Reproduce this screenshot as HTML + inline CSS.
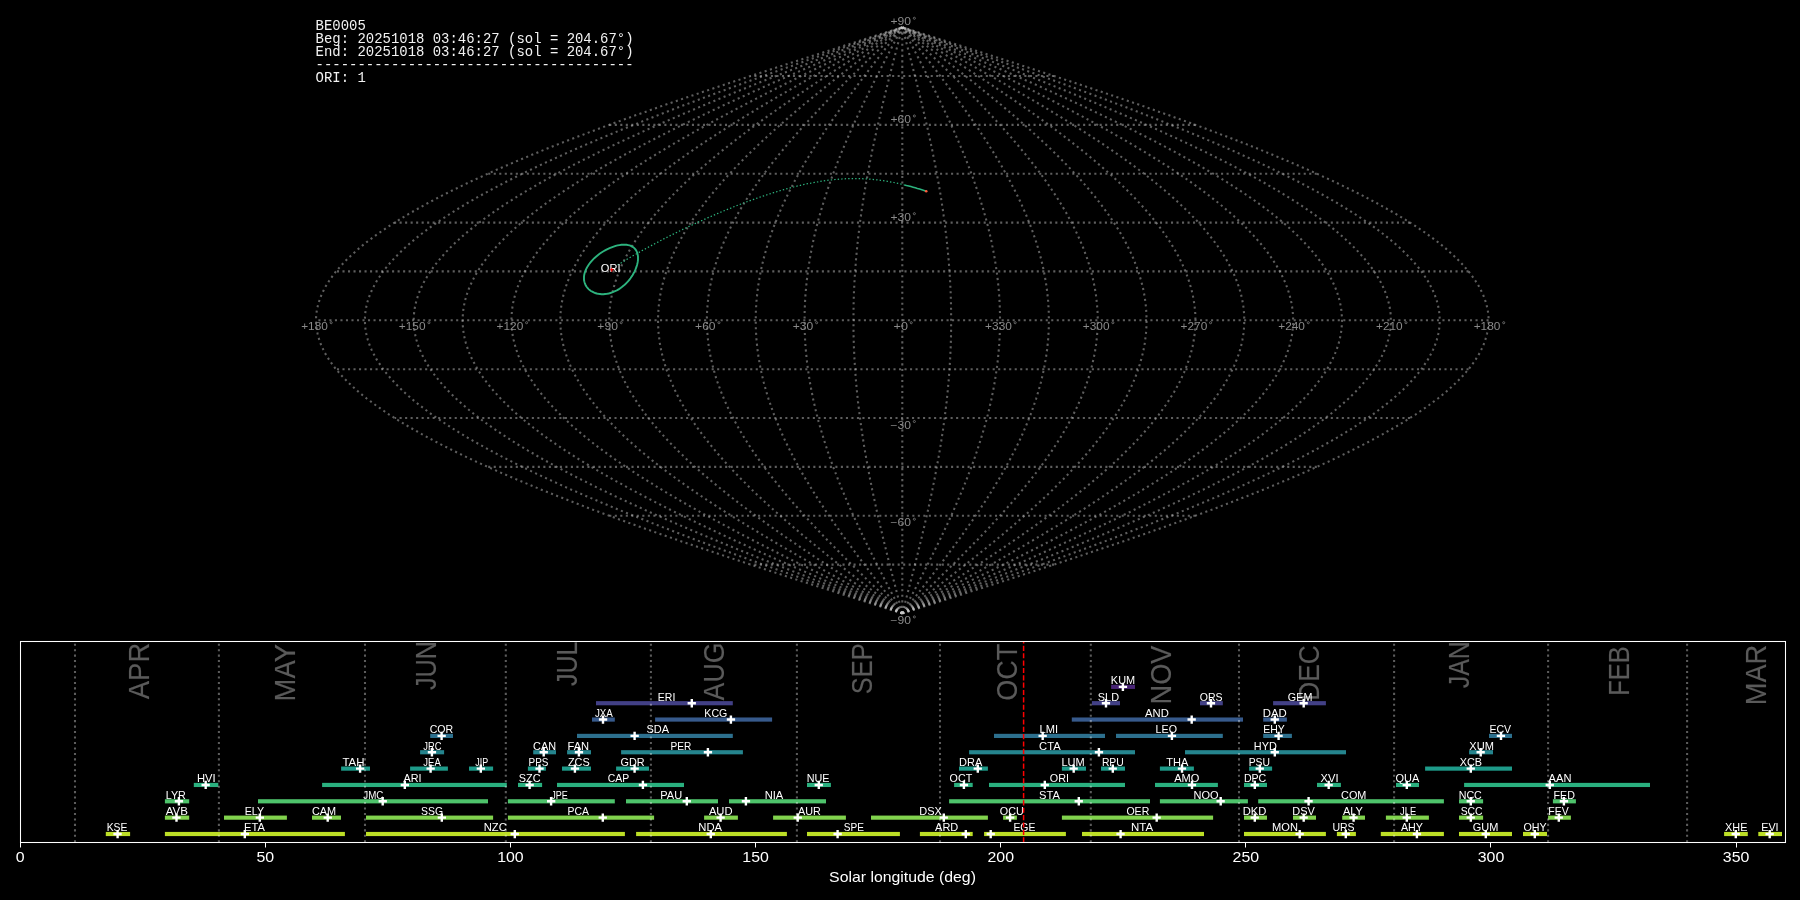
<!DOCTYPE html><html><head><meta charset="utf-8"><style>html,body{margin:0;padding:0;background:#000;width:1800px;height:900px;overflow:hidden}svg{display:block;will-change:transform}text{font-family:"Liberation Sans",sans-serif}.m{font-family:"Liberation Mono",monospace}</style></head><body>
<svg width="1800" height="900" viewBox="0 0 1800 900">
<rect width="1800" height="900" fill="#000"/>
<g fill="none" stroke="#c8c8c8" stroke-opacity="0.47" stroke-width="2.08" stroke-dasharray="2.08 3.43"><path d="M902.3 613.4 902.3 610.2 902.3 606.9 902.3 603.7 902.3 600.4 902.3 597.1 902.3 593.9 902.3 590.6 902.3 587.4 902.3 584.1 902.3 580.9 902.3 577.6 902.3 574.3 902.3 571.1 902.3 567.8 902.3 564.6 902.3 561.3 902.3 558.1 902.3 554.8 902.3 551.5 902.3 548.3 902.3 545.0 902.3 541.8 902.3 538.5 902.3 535.3 902.3 532.0 902.3 528.7 902.3 525.5 902.3 522.2 902.3 519.0 902.3 515.7 902.3 512.5 902.3 509.2 902.3 505.9 902.3 502.7 902.3 499.4 902.3 496.2 902.3 492.9 902.3 489.7 902.3 486.4 902.3 483.1 902.3 479.9 902.3 476.6 902.3 473.4 902.3 470.1 902.3 466.9 902.3 463.6 902.3 460.4 902.3 457.1 902.3 453.8 902.3 450.6 902.3 447.3 902.3 444.1 902.3 440.8 902.3 437.6 902.3 434.3 902.3 431.0 902.3 427.8 902.3 424.5 902.3 421.3 902.3 418.0 902.3 414.8 902.3 411.5 902.3 408.2 902.3 405.0 902.3 401.7 902.3 398.5 902.3 395.2 902.3 392.0 902.3 388.7 902.3 385.4 902.3 382.2 902.3 378.9 902.3 375.7 902.3 372.4 902.3 369.2 902.3 365.9 902.3 362.6 902.3 359.4 902.3 356.1 902.3 352.9 902.3 349.6 902.3 346.4 902.3 343.1 902.3 339.8 902.3 336.6 902.3 333.3 902.3 330.1 902.3 326.8 902.3 323.6 902.3 320.3 902.3 317.0 902.3 313.8 902.3 310.5 902.3 307.3 902.3 304.0 902.3 300.8 902.3 297.5 902.3 294.2 902.3 291.0 902.3 287.7 902.3 284.5 902.3 281.2 902.3 278.0 902.3 274.7 902.3 271.4 902.3 268.2 902.3 264.9 902.3 261.7 902.3 258.4 902.3 255.2 902.3 251.9 902.3 248.6 902.3 245.4 902.3 242.1 902.3 238.9 902.3 235.6 902.3 232.4 902.3 229.1 902.3 225.8 902.3 222.6 902.3 219.3 902.3 216.1 902.3 212.8 902.3 209.6 902.3 206.3 902.3 203.0 902.3 199.8 902.3 196.5 902.3 193.3 902.3 190.0 902.3 186.8 902.3 183.5 902.3 180.2 902.3 177.0 902.3 173.7 902.3 170.5 902.3 167.2 902.3 164.0 902.3 160.7 902.3 157.5 902.3 154.2 902.3 150.9 902.3 147.7 902.3 144.4 902.3 141.2 902.3 137.9 902.3 134.7 902.3 131.4 902.3 128.1 902.3 124.9 902.3 121.6 902.3 118.4 902.3 115.1 902.3 111.9 902.3 108.6 902.3 105.3 902.3 102.1 902.3 98.8 902.3 95.6 902.3 92.3 902.3 89.1 902.3 85.8 902.3 82.5 902.3 79.3 902.3 76.0 902.3 72.8 902.3 69.5 902.3 66.3 902.3 63.0 902.3 59.7 902.3 56.5 902.3 53.2 902.3 50.0 902.3 46.7 902.3 43.5 902.3 40.2 902.3 36.9 902.3 33.7 902.3 30.4 902.3 27.2"/><path d="M902.3 613.4 901.4 610.2 900.6 606.9 899.7 603.7 898.9 600.4 898.0 597.1 897.2 593.9 896.3 590.6 895.5 587.4 894.7 584.1 893.8 580.9 893.0 577.6 892.1 574.3 891.3 571.1 890.5 567.8 889.7 564.6 888.8 561.3 888.0 558.1 887.2 554.8 886.4 551.5 885.6 548.3 884.8 545.0 884.0 541.8 883.2 538.5 882.4 535.3 881.7 532.0 880.9 528.7 880.1 525.5 879.4 522.2 878.6 519.0 877.9 515.7 877.1 512.5 876.4 509.2 875.7 505.9 875.0 502.7 874.3 499.4 873.6 496.2 872.9 492.9 872.2 489.7 871.6 486.4 870.9 483.1 870.2 479.9 869.6 476.6 869.0 473.4 868.4 470.1 867.8 466.9 867.2 463.6 866.6 460.4 866.0 457.1 865.4 453.8 864.9 450.6 864.3 447.3 863.8 444.1 863.3 440.8 862.8 437.6 862.3 434.3 861.8 431.0 861.3 427.8 860.9 424.5 860.4 421.3 860.0 418.0 859.6 414.8 859.2 411.5 858.8 408.2 858.4 405.0 858.0 401.7 857.7 398.5 857.3 395.2 857.0 392.0 856.7 388.7 856.4 385.4 856.1 382.2 855.8 378.9 855.6 375.7 855.3 372.4 855.1 369.2 854.9 365.9 854.7 362.6 854.5 359.4 854.3 356.1 854.2 352.9 854.0 349.6 853.9 346.4 853.8 343.1 853.7 339.8 853.6 336.6 853.6 333.3 853.5 330.1 853.5 326.8 853.5 323.6 853.4 320.3 853.5 317.0 853.5 313.8 853.5 310.5 853.6 307.3 853.6 304.0 853.7 300.8 853.8 297.5 853.9 294.2 854.0 291.0 854.2 287.7 854.3 284.5 854.5 281.2 854.7 278.0 854.9 274.7 855.1 271.4 855.3 268.2 855.6 264.9 855.8 261.7 856.1 258.4 856.4 255.2 856.7 251.9 857.0 248.6 857.3 245.4 857.7 242.1 858.0 238.9 858.4 235.6 858.8 232.4 859.2 229.1 859.6 225.8 860.0 222.6 860.4 219.3 860.9 216.1 861.3 212.8 861.8 209.6 862.3 206.3 862.8 203.0 863.3 199.8 863.8 196.5 864.3 193.3 864.9 190.0 865.4 186.8 866.0 183.5 866.6 180.2 867.2 177.0 867.8 173.7 868.4 170.5 869.0 167.2 869.6 164.0 870.2 160.7 870.9 157.5 871.6 154.2 872.2 150.9 872.9 147.7 873.6 144.4 874.3 141.2 875.0 137.9 875.7 134.7 876.4 131.4 877.1 128.1 877.9 124.9 878.6 121.6 879.4 118.4 880.1 115.1 880.9 111.9 881.7 108.6 882.4 105.3 883.2 102.1 884.0 98.8 884.8 95.6 885.6 92.3 886.4 89.1 887.2 85.8 888.0 82.5 888.8 79.3 889.7 76.0 890.5 72.8 891.3 69.5 892.1 66.3 893.0 63.0 893.8 59.7 894.7 56.5 895.5 53.2 896.3 50.0 897.2 46.7 898.0 43.5 898.9 40.2 899.7 36.9 900.6 33.7 901.4 30.4 902.3 27.2"/><path d="M902.3 613.4 900.6 610.2 898.9 606.9 897.2 603.7 895.5 600.4 893.8 597.1 892.1 593.9 890.4 590.6 888.7 587.4 887.0 584.1 885.3 580.9 883.7 577.6 882.0 574.3 880.3 571.1 878.7 567.8 877.0 564.6 875.4 561.3 873.7 558.1 872.1 554.8 870.5 551.5 868.9 548.3 867.3 545.0 865.7 541.8 864.1 538.5 862.6 535.3 861.0 532.0 859.5 528.7 857.9 525.5 856.4 522.2 854.9 519.0 853.4 515.7 852.0 512.5 850.5 509.2 849.1 505.9 847.7 502.7 846.3 499.4 844.9 496.2 843.5 492.9 842.1 489.7 840.8 486.4 839.5 483.1 838.2 479.9 836.9 476.6 835.7 473.4 834.4 470.1 833.2 466.9 832.0 463.6 830.8 460.4 829.7 457.1 828.6 453.8 827.4 450.6 826.4 447.3 825.3 444.1 824.3 440.8 823.3 437.6 822.3 434.3 821.3 431.0 820.4 427.8 819.4 424.5 818.5 421.3 817.7 418.0 816.8 414.8 816.0 411.5 815.2 408.2 814.5 405.0 813.7 401.7 813.0 398.5 812.4 395.2 811.7 392.0 811.1 388.7 810.5 385.4 809.9 382.2 809.4 378.9 808.9 375.7 808.4 372.4 807.9 369.2 807.5 365.9 807.1 362.6 806.7 359.4 806.4 356.1 806.1 352.9 805.8 349.6 805.5 346.4 805.3 343.1 805.1 339.8 805.0 336.6 804.8 333.3 804.7 330.1 804.6 326.8 804.6 323.6 804.6 320.3 804.6 317.0 804.6 313.8 804.7 310.5 804.8 307.3 805.0 304.0 805.1 300.8 805.3 297.5 805.5 294.2 805.8 291.0 806.1 287.7 806.4 284.5 806.7 281.2 807.1 278.0 807.5 274.7 807.9 271.4 808.4 268.2 808.9 264.9 809.4 261.7 809.9 258.4 810.5 255.2 811.1 251.9 811.7 248.6 812.4 245.4 813.0 242.1 813.7 238.9 814.5 235.6 815.2 232.4 816.0 229.1 816.8 225.8 817.7 222.6 818.5 219.3 819.4 216.1 820.4 212.8 821.3 209.6 822.3 206.3 823.3 203.0 824.3 199.8 825.3 196.5 826.4 193.3 827.4 190.0 828.6 186.8 829.7 183.5 830.8 180.2 832.0 177.0 833.2 173.7 834.4 170.5 835.7 167.2 836.9 164.0 838.2 160.7 839.5 157.5 840.8 154.2 842.1 150.9 843.5 147.7 844.9 144.4 846.3 141.2 847.7 137.9 849.1 134.7 850.5 131.4 852.0 128.1 853.4 124.9 854.9 121.6 856.4 118.4 857.9 115.1 859.5 111.9 861.0 108.6 862.6 105.3 864.1 102.1 865.7 98.8 867.3 95.6 868.9 92.3 870.5 89.1 872.1 85.8 873.7 82.5 875.4 79.3 877.0 76.0 878.7 72.8 880.3 69.5 882.0 66.3 883.7 63.0 885.3 59.7 887.0 56.5 888.7 53.2 890.4 50.0 892.1 46.7 893.8 43.5 895.5 40.2 897.2 36.9 898.9 33.7 900.6 30.4 902.3 27.2"/><path d="M902.3 613.4 899.7 610.2 897.2 606.9 894.6 603.7 892.1 600.4 889.5 597.1 887.0 593.9 884.4 590.6 881.9 587.4 879.4 584.1 876.8 580.9 874.3 577.6 871.8 574.3 869.3 571.1 866.8 567.8 864.4 564.6 861.9 561.3 859.4 558.1 857.0 554.8 854.6 551.5 852.2 548.3 849.8 545.0 847.4 541.8 845.0 538.5 842.7 535.3 840.4 532.0 838.1 528.7 835.8 525.5 833.5 522.2 831.2 519.0 829.0 515.7 826.8 512.5 824.6 509.2 822.5 505.9 820.3 502.7 818.2 499.4 816.2 496.2 814.1 492.9 812.1 489.7 810.1 486.4 808.1 483.1 806.1 479.9 804.2 476.6 802.3 473.4 800.5 470.1 798.7 466.9 796.9 463.6 795.1 460.4 793.4 457.1 791.7 453.8 790.0 450.6 788.4 447.3 786.8 444.1 785.2 440.8 783.7 437.6 782.2 434.3 780.8 431.0 779.4 427.8 778.0 424.5 776.7 421.3 775.4 418.0 774.1 414.8 772.9 411.5 771.7 408.2 770.6 405.0 769.5 401.7 768.4 398.5 767.4 395.2 766.4 392.0 765.5 388.7 764.6 385.4 763.7 382.2 762.9 378.9 762.1 375.7 761.4 372.4 760.7 369.2 760.1 365.9 759.5 362.6 758.9 359.4 758.4 356.1 758.0 352.9 757.5 349.6 757.2 346.4 756.8 343.1 756.5 339.8 756.3 336.6 756.1 333.3 755.9 330.1 755.8 326.8 755.8 323.6 755.7 320.3 755.8 317.0 755.8 313.8 755.9 310.5 756.1 307.3 756.3 304.0 756.5 300.8 756.8 297.5 757.2 294.2 757.5 291.0 758.0 287.7 758.4 284.5 758.9 281.2 759.5 278.0 760.1 274.7 760.7 271.4 761.4 268.2 762.1 264.9 762.9 261.7 763.7 258.4 764.6 255.2 765.5 251.9 766.4 248.6 767.4 245.4 768.4 242.1 769.5 238.9 770.6 235.6 771.7 232.4 772.9 229.1 774.1 225.8 775.4 222.6 776.7 219.3 778.0 216.1 779.4 212.8 780.8 209.6 782.2 206.3 783.7 203.0 785.2 199.8 786.8 196.5 788.4 193.3 790.0 190.0 791.7 186.8 793.4 183.5 795.1 180.2 796.9 177.0 798.7 173.7 800.5 170.5 802.3 167.2 804.2 164.0 806.1 160.7 808.1 157.5 810.1 154.2 812.1 150.9 814.1 147.7 816.2 144.4 818.2 141.2 820.3 137.9 822.5 134.7 824.6 131.4 826.8 128.1 829.0 124.9 831.2 121.6 833.5 118.4 835.8 115.1 838.1 111.9 840.4 108.6 842.7 105.3 845.0 102.1 847.4 98.8 849.8 95.6 852.2 92.3 854.6 89.1 857.0 85.8 859.4 82.5 861.9 79.3 864.4 76.0 866.8 72.8 869.3 69.5 871.8 66.3 874.3 63.0 876.8 59.7 879.4 56.5 881.9 53.2 884.4 50.0 887.0 46.7 889.5 43.5 892.1 40.2 894.6 36.9 897.2 33.7 899.7 30.4 902.3 27.2"/><path d="M902.3 613.4 898.9 610.2 895.5 606.9 892.1 603.7 888.7 600.4 885.3 597.1 881.9 593.9 878.5 590.6 875.1 587.4 871.7 584.1 868.4 580.9 865.0 577.6 861.7 574.3 858.3 571.1 855.0 567.8 851.7 564.6 848.4 561.3 845.2 558.1 841.9 554.8 838.7 551.5 835.5 548.3 832.3 545.0 829.1 541.8 825.9 538.5 822.8 535.3 819.7 532.0 816.6 528.7 813.6 525.5 810.6 522.2 807.6 519.0 804.6 515.7 801.7 512.5 798.7 509.2 795.9 505.9 793.0 502.7 790.2 499.4 787.4 496.2 784.7 492.9 782.0 489.7 779.3 486.4 776.7 483.1 774.1 479.9 771.5 476.6 769.0 473.4 766.5 470.1 764.1 466.9 761.7 463.6 759.4 460.4 757.1 457.1 754.8 453.8 752.6 450.6 750.4 447.3 748.3 444.1 746.2 440.8 744.2 437.6 742.2 434.3 740.3 431.0 738.4 427.8 736.6 424.5 734.8 421.3 733.1 418.0 731.4 414.8 729.8 411.5 728.2 408.2 726.7 405.0 725.2 401.7 723.8 398.5 722.4 395.2 721.1 392.0 719.9 388.7 718.7 385.4 717.5 382.2 716.4 378.9 715.4 375.7 714.5 372.4 713.5 369.2 712.7 365.9 711.9 362.6 711.2 359.4 710.5 356.1 709.8 352.9 709.3 349.6 708.8 346.4 708.3 343.1 708.0 339.8 707.6 336.6 707.4 333.3 707.1 330.1 707.0 326.8 706.9 323.6 706.9 320.3 706.9 317.0 707.0 313.8 707.1 310.5 707.4 307.3 707.6 304.0 708.0 300.8 708.3 297.5 708.8 294.2 709.3 291.0 709.8 287.7 710.5 284.5 711.2 281.2 711.9 278.0 712.7 274.7 713.5 271.4 714.5 268.2 715.4 264.9 716.4 261.7 717.5 258.4 718.7 255.2 719.9 251.9 721.1 248.6 722.4 245.4 723.8 242.1 725.2 238.9 726.7 235.6 728.2 232.4 729.8 229.1 731.4 225.8 733.1 222.6 734.8 219.3 736.6 216.1 738.4 212.8 740.3 209.6 742.2 206.3 744.2 203.0 746.2 199.8 748.3 196.5 750.4 193.3 752.6 190.0 754.8 186.8 757.1 183.5 759.4 180.2 761.7 177.0 764.1 173.7 766.5 170.5 769.0 167.2 771.5 164.0 774.1 160.7 776.7 157.5 779.3 154.2 782.0 150.9 784.7 147.7 787.4 144.4 790.2 141.2 793.0 137.9 795.9 134.7 798.7 131.4 801.7 128.1 804.6 124.9 807.6 121.6 810.6 118.4 813.6 115.1 816.6 111.9 819.7 108.6 822.8 105.3 825.9 102.1 829.1 98.8 832.3 95.6 835.5 92.3 838.7 89.1 841.9 85.8 845.2 82.5 848.4 79.3 851.7 76.0 855.0 72.8 858.3 69.5 861.7 66.3 865.0 63.0 868.4 59.7 871.7 56.5 875.1 53.2 878.5 50.0 881.9 46.7 885.3 43.5 888.7 40.2 892.1 36.9 895.5 33.7 898.9 30.4 902.3 27.2"/><path d="M902.3 613.4 898.0 610.2 893.8 606.9 889.5 603.7 885.3 600.4 881.0 597.1 876.8 593.9 872.5 590.6 868.3 587.4 864.1 584.1 859.9 580.9 855.7 577.6 851.5 574.3 847.4 571.1 843.2 567.8 839.1 564.6 835.0 561.3 830.9 558.1 826.8 554.8 822.8 551.5 818.8 548.3 814.8 545.0 810.8 541.8 806.9 538.5 802.9 535.3 799.1 532.0 795.2 528.7 791.4 525.5 787.6 522.2 783.9 519.0 780.2 515.7 776.5 512.5 772.9 509.2 769.3 505.9 765.7 502.7 762.2 499.4 758.7 496.2 755.3 492.9 751.9 489.7 748.6 486.4 745.3 483.1 742.0 479.9 738.8 476.6 735.7 473.4 732.6 470.1 729.6 466.9 726.6 463.6 723.6 460.4 720.8 457.1 717.9 453.8 715.2 450.6 712.5 447.3 709.8 444.1 707.2 440.8 704.7 437.6 702.2 434.3 699.8 431.0 697.4 427.8 695.1 424.5 692.9 421.3 690.8 418.0 688.7 414.8 686.6 411.5 684.6 408.2 682.7 405.0 680.9 401.7 679.1 398.5 677.4 395.2 675.8 392.0 674.2 388.7 672.8 385.4 671.3 382.2 670.0 378.9 668.7 375.7 667.5 372.4 666.3 369.2 665.3 365.9 664.3 362.6 663.4 359.4 662.5 356.1 661.7 352.9 661.0 349.6 660.4 346.4 659.8 343.1 659.4 339.8 659.0 336.6 658.6 333.3 658.4 330.1 658.2 326.8 658.1 323.6 658.0 320.3 658.1 317.0 658.2 313.8 658.4 310.5 658.6 307.3 659.0 304.0 659.4 300.8 659.8 297.5 660.4 294.2 661.0 291.0 661.7 287.7 662.5 284.5 663.4 281.2 664.3 278.0 665.3 274.7 666.3 271.4 667.5 268.2 668.7 264.9 670.0 261.7 671.3 258.4 672.8 255.2 674.2 251.9 675.8 248.6 677.4 245.4 679.1 242.1 680.9 238.9 682.7 235.6 684.6 232.4 686.6 229.1 688.7 225.8 690.8 222.6 692.9 219.3 695.1 216.1 697.4 212.8 699.8 209.6 702.2 206.3 704.7 203.0 707.2 199.8 709.8 196.5 712.5 193.3 715.2 190.0 717.9 186.8 720.8 183.5 723.6 180.2 726.6 177.0 729.6 173.7 732.6 170.5 735.7 167.2 738.8 164.0 742.0 160.7 745.3 157.5 748.6 154.2 751.9 150.9 755.3 147.7 758.7 144.4 762.2 141.2 765.7 137.9 769.3 134.7 772.9 131.4 776.5 128.1 780.2 124.9 783.9 121.6 787.6 118.4 791.4 115.1 795.2 111.9 799.1 108.6 802.9 105.3 806.9 102.1 810.8 98.8 814.8 95.6 818.8 92.3 822.8 89.1 826.8 85.8 830.9 82.5 835.0 79.3 839.1 76.0 843.2 72.8 847.4 69.5 851.5 66.3 855.7 63.0 859.9 59.7 864.1 56.5 868.3 53.2 872.5 50.0 876.8 46.7 881.0 43.5 885.3 40.2 889.5 36.9 893.8 33.7 898.0 30.4 902.3 27.2"/><path d="M902.3 613.4 897.2 610.2 892.1 606.9 887.0 603.7 881.9 600.4 876.8 597.1 871.7 593.9 866.6 590.6 861.5 587.4 856.4 584.1 851.4 580.9 846.4 577.6 841.4 574.3 836.4 571.1 831.4 567.8 826.4 564.6 821.5 561.3 816.6 558.1 811.7 554.8 806.9 551.5 802.0 548.3 797.3 545.0 792.5 541.8 787.8 538.5 783.1 535.3 778.4 532.0 773.8 528.7 769.2 525.5 764.7 522.2 760.2 519.0 755.7 515.7 751.3 512.5 747.0 509.2 742.6 505.9 738.4 502.7 734.2 499.4 730.0 496.2 725.9 492.9 721.8 489.7 717.8 486.4 713.9 483.1 710.0 479.9 706.2 476.6 702.4 473.4 698.7 470.1 695.0 466.9 691.4 463.6 687.9 460.4 684.5 457.1 681.1 453.8 677.7 450.6 674.5 447.3 671.3 444.1 668.2 440.8 665.2 437.6 662.2 434.3 659.3 431.0 656.5 427.8 653.7 424.5 651.0 421.3 648.4 418.0 645.9 414.8 643.5 411.5 641.1 408.2 638.8 405.0 636.6 401.7 634.5 398.5 632.5 395.2 630.5 392.0 628.6 388.7 626.8 385.4 625.1 382.2 623.5 378.9 622.0 375.7 620.5 372.4 619.2 369.2 617.9 365.9 616.7 362.6 615.6 359.4 614.6 356.1 613.6 352.9 612.8 349.6 612.0 346.4 611.4 343.1 610.8 339.8 610.3 336.6 609.9 333.3 609.6 330.1 609.3 326.8 609.2 323.6 609.2 320.3 609.2 317.0 609.3 313.8 609.6 310.5 609.9 307.3 610.3 304.0 610.8 300.8 611.4 297.5 612.0 294.2 612.8 291.0 613.6 287.7 614.6 284.5 615.6 281.2 616.7 278.0 617.9 274.7 619.2 271.4 620.5 268.2 622.0 264.9 623.5 261.7 625.1 258.4 626.8 255.2 628.6 251.9 630.5 248.6 632.5 245.4 634.5 242.1 636.6 238.9 638.8 235.6 641.1 232.4 643.5 229.1 645.9 225.8 648.4 222.6 651.0 219.3 653.7 216.1 656.5 212.8 659.3 209.6 662.2 206.3 665.2 203.0 668.2 199.8 671.3 196.5 674.5 193.3 677.7 190.0 681.1 186.8 684.5 183.5 687.9 180.2 691.4 177.0 695.0 173.7 698.7 170.5 702.4 167.2 706.2 164.0 710.0 160.7 713.9 157.5 717.8 154.2 721.8 150.9 725.9 147.7 730.0 144.4 734.2 141.2 738.4 137.9 742.6 134.7 747.0 131.4 751.3 128.1 755.7 124.9 760.2 121.6 764.7 118.4 769.2 115.1 773.8 111.9 778.4 108.6 783.1 105.3 787.8 102.1 792.5 98.8 797.3 95.6 802.0 92.3 806.9 89.1 811.7 85.8 816.6 82.5 821.5 79.3 826.4 76.0 831.4 72.8 836.4 69.5 841.4 66.3 846.4 63.0 851.4 59.7 856.4 56.5 861.5 53.2 866.6 50.0 871.7 46.7 876.8 43.5 881.9 40.2 887.0 36.9 892.1 33.7 897.2 30.4 902.3 27.2"/><path d="M902.3 613.4 896.3 610.2 890.4 606.9 884.4 603.7 878.4 600.4 872.5 597.1 866.6 593.9 860.6 590.6 854.7 587.4 848.8 584.1 842.9 580.9 837.0 577.6 831.2 574.3 825.4 571.1 819.6 567.8 813.8 564.6 808.0 561.3 802.3 558.1 796.6 554.8 791.0 551.5 785.3 548.3 779.7 545.0 774.2 541.8 768.7 538.5 763.2 535.3 757.8 532.0 752.4 528.7 747.0 525.5 741.7 522.2 736.5 519.0 731.3 515.7 726.2 512.5 721.1 509.2 716.0 505.9 711.1 502.7 706.1 499.4 701.3 496.2 696.5 492.9 691.8 489.7 687.1 486.4 682.5 483.1 677.9 479.9 673.5 476.6 669.1 473.4 664.7 470.1 660.5 466.9 656.3 463.6 652.2 460.4 648.2 457.1 644.2 453.8 640.3 450.6 636.5 447.3 632.8 444.1 629.2 440.8 625.6 437.6 622.2 434.3 618.8 431.0 615.5 427.8 612.3 424.5 609.2 421.3 606.1 418.0 603.2 414.8 600.3 411.5 597.6 408.2 594.9 405.0 592.4 401.7 589.9 398.5 587.5 395.2 585.2 392.0 583.0 388.7 580.9 385.4 578.9 382.2 577.1 378.9 575.3 375.7 573.6 372.4 572.0 369.2 570.5 365.9 569.1 362.6 567.8 359.4 566.6 356.1 565.5 352.9 564.5 349.6 563.6 346.4 562.9 343.1 562.2 339.8 561.6 336.6 561.1 333.3 560.8 330.1 560.5 326.8 560.4 323.6 560.3 320.3 560.4 317.0 560.5 313.8 560.8 310.5 561.1 307.3 561.6 304.0 562.2 300.8 562.9 297.5 563.6 294.2 564.5 291.0 565.5 287.7 566.6 284.5 567.8 281.2 569.1 278.0 570.5 274.7 572.0 271.4 573.6 268.2 575.3 264.9 577.1 261.7 578.9 258.4 580.9 255.2 583.0 251.9 585.2 248.6 587.5 245.4 589.9 242.1 592.4 238.9 594.9 235.6 597.6 232.4 600.3 229.1 603.2 225.8 606.1 222.6 609.2 219.3 612.3 216.1 615.5 212.8 618.8 209.6 622.2 206.3 625.6 203.0 629.2 199.8 632.8 196.5 636.5 193.3 640.3 190.0 644.2 186.8 648.2 183.5 652.2 180.2 656.3 177.0 660.5 173.7 664.7 170.5 669.1 167.2 673.5 164.0 677.9 160.7 682.5 157.5 687.1 154.2 691.8 150.9 696.5 147.7 701.3 144.4 706.1 141.2 711.1 137.9 716.0 134.7 721.1 131.4 726.2 128.1 731.3 124.9 736.5 121.6 741.7 118.4 747.0 115.1 752.4 111.9 757.8 108.6 763.2 105.3 768.7 102.1 774.2 98.8 779.7 95.6 785.3 92.3 791.0 89.1 796.6 85.8 802.3 82.5 808.0 79.3 813.8 76.0 819.6 72.8 825.4 69.5 831.2 66.3 837.0 63.0 842.9 59.7 848.8 56.5 854.7 53.2 860.6 50.0 866.6 46.7 872.5 43.5 878.4 40.2 884.4 36.9 890.4 33.7 896.3 30.4 902.3 27.2"/><path d="M902.3 613.4 895.5 610.2 888.7 606.9 881.8 603.7 875.0 600.4 868.2 597.1 861.4 593.9 854.7 590.6 847.9 587.4 841.2 584.1 834.4 580.9 827.7 577.6 821.0 574.3 814.4 571.1 807.7 567.8 801.1 564.6 794.6 561.3 788.0 558.1 781.5 554.8 775.1 551.5 768.6 548.3 762.2 545.0 755.9 541.8 749.6 538.5 743.3 535.3 737.1 532.0 731.0 528.7 724.9 525.5 718.8 522.2 712.8 519.0 706.9 515.7 701.0 512.5 695.2 509.2 689.4 505.9 683.7 502.7 678.1 499.4 672.6 496.2 667.1 492.9 661.7 489.7 656.3 486.4 651.1 483.1 645.9 479.9 640.8 476.6 635.7 473.4 630.8 470.1 625.9 466.9 621.2 463.6 616.5 460.4 611.8 457.1 607.3 453.8 602.9 450.6 598.6 447.3 594.3 444.1 590.2 440.8 586.1 437.6 582.1 434.3 578.3 431.0 574.5 427.8 570.8 424.5 567.3 421.3 563.8 418.0 560.5 414.8 557.2 411.5 554.1 408.2 551.0 405.0 548.1 401.7 545.2 398.5 542.5 395.2 539.9 392.0 537.4 388.7 535.0 385.4 532.8 382.2 530.6 378.9 528.5 375.7 526.6 372.4 524.8 369.2 523.1 365.9 521.5 362.6 520.0 359.4 518.6 356.1 517.4 352.9 516.3 349.6 515.3 346.4 514.4 343.1 513.6 339.8 512.9 336.6 512.4 333.3 512.0 330.1 511.7 326.8 511.5 323.6 511.5 320.3 511.5 317.0 511.7 313.8 512.0 310.5 512.4 307.3 512.9 304.0 513.6 300.8 514.4 297.5 515.3 294.2 516.3 291.0 517.4 287.7 518.6 284.5 520.0 281.2 521.5 278.0 523.1 274.7 524.8 271.4 526.6 268.2 528.5 264.9 530.6 261.7 532.8 258.4 535.0 255.2 537.4 251.9 539.9 248.6 542.5 245.4 545.2 242.1 548.1 238.9 551.0 235.6 554.1 232.4 557.2 229.1 560.5 225.8 563.8 222.6 567.3 219.3 570.8 216.1 574.5 212.8 578.3 209.6 582.1 206.3 586.1 203.0 590.2 199.8 594.3 196.5 598.6 193.3 602.9 190.0 607.3 186.8 611.8 183.5 616.5 180.2 621.2 177.0 625.9 173.7 630.8 170.5 635.7 167.2 640.8 164.0 645.9 160.7 651.1 157.5 656.3 154.2 661.7 150.9 667.1 147.7 672.6 144.4 678.1 141.2 683.7 137.9 689.4 134.7 695.2 131.4 701.0 128.1 706.9 124.9 712.8 121.6 718.8 118.4 724.9 115.1 731.0 111.9 737.1 108.6 743.3 105.3 749.6 102.1 755.9 98.8 762.2 95.6 768.6 92.3 775.1 89.1 781.5 85.8 788.0 82.5 794.6 79.3 801.1 76.0 807.7 72.8 814.4 69.5 821.0 66.3 827.7 63.0 834.4 59.7 841.2 56.5 847.9 53.2 854.7 50.0 861.4 46.7 868.2 43.5 875.0 40.2 881.8 36.9 888.7 33.7 895.5 30.4 902.3 27.2"/><path d="M902.3 613.4 894.6 610.2 887.0 606.9 879.3 603.7 871.6 600.4 864.0 597.1 856.3 593.9 848.7 590.6 841.1 587.4 833.5 584.1 825.9 580.9 818.4 577.6 810.9 574.3 803.4 571.1 795.9 567.8 788.5 564.6 781.1 561.3 773.7 558.1 766.4 554.8 759.1 551.5 751.9 548.3 744.7 545.0 737.6 541.8 730.5 538.5 723.5 535.3 716.5 532.0 709.6 528.7 702.7 525.5 695.9 522.2 689.1 519.0 682.5 515.7 675.8 512.5 669.3 509.2 662.8 505.9 656.4 502.7 650.1 499.4 643.9 496.2 637.7 492.9 631.6 489.7 625.6 486.4 619.7 483.1 613.8 479.9 608.1 476.6 602.4 473.4 596.9 470.1 591.4 466.9 586.0 463.6 580.7 460.4 575.5 457.1 570.5 453.8 565.5 450.6 560.6 447.3 555.8 444.1 551.1 440.8 546.6 437.6 542.1 434.3 537.8 431.0 533.5 427.8 529.4 424.5 525.4 421.3 521.5 418.0 517.7 414.8 514.1 411.5 510.5 408.2 507.1 405.0 503.8 401.7 500.6 398.5 497.6 395.2 494.6 392.0 491.8 388.7 489.1 385.4 486.6 382.2 484.1 378.9 481.8 375.7 479.6 372.4 477.6 369.2 475.7 365.9 473.9 362.6 472.2 359.4 470.7 356.1 469.3 352.9 468.0 349.6 466.9 346.4 465.9 343.1 465.0 339.8 464.3 336.6 463.7 333.3 463.2 330.1 462.9 326.8 462.7 323.6 462.6 320.3 462.7 317.0 462.9 313.8 463.2 310.5 463.7 307.3 464.3 304.0 465.0 300.8 465.9 297.5 466.9 294.2 468.0 291.0 469.3 287.7 470.7 284.5 472.2 281.2 473.9 278.0 475.7 274.7 477.6 271.4 479.6 268.2 481.8 264.9 484.1 261.7 486.6 258.4 489.1 255.2 491.8 251.9 494.6 248.6 497.6 245.4 500.6 242.1 503.8 238.9 507.1 235.6 510.5 232.4 514.1 229.1 517.7 225.8 521.5 222.6 525.4 219.3 529.4 216.1 533.5 212.8 537.8 209.6 542.1 206.3 546.6 203.0 551.1 199.8 555.8 196.5 560.6 193.3 565.5 190.0 570.5 186.8 575.5 183.5 580.7 180.2 586.0 177.0 591.4 173.7 596.9 170.5 602.4 167.2 608.1 164.0 613.8 160.7 619.7 157.5 625.6 154.2 631.6 150.9 637.7 147.7 643.9 144.4 650.1 141.2 656.4 137.9 662.8 134.7 669.3 131.4 675.8 128.1 682.5 124.9 689.1 121.6 695.9 118.4 702.7 115.1 709.6 111.9 716.5 108.6 723.5 105.3 730.5 102.1 737.6 98.8 744.7 95.6 751.9 92.3 759.1 89.1 766.4 85.8 773.7 82.5 781.1 79.3 788.5 76.0 795.9 72.8 803.4 69.5 810.9 66.3 818.4 63.0 825.9 59.7 833.5 56.5 841.1 53.2 848.7 50.0 856.3 46.7 864.0 43.5 871.6 40.2 879.3 36.9 887.0 33.7 894.6 30.4 902.3 27.2"/><path d="M902.3 613.4 893.8 610.2 885.2 606.9 876.7 603.7 868.2 600.4 859.7 597.1 851.2 593.9 842.8 590.6 834.3 587.4 825.9 584.1 817.5 580.9 809.1 577.6 800.7 574.3 792.4 571.1 784.1 567.8 775.9 564.6 767.6 561.3 759.5 558.1 751.3 554.8 743.2 551.5 735.2 548.3 727.2 545.0 719.3 541.8 711.4 538.5 703.6 535.3 695.8 532.0 688.1 528.7 680.5 525.5 672.9 522.2 665.4 519.0 658.0 515.7 650.7 512.5 643.4 509.2 636.2 505.9 629.1 502.7 622.1 499.4 615.1 496.2 608.3 492.9 601.5 489.7 594.8 486.4 588.3 483.1 581.8 479.9 575.4 476.6 569.1 473.4 562.9 470.1 556.8 466.9 550.9 463.6 545.0 460.4 539.2 457.1 533.6 453.8 528.0 450.6 522.6 447.3 517.3 444.1 512.1 440.8 507.1 437.6 502.1 434.3 497.3 431.0 492.6 427.8 488.0 424.5 483.5 421.3 479.2 418.0 475.0 414.8 470.9 411.5 467.0 408.2 463.2 405.0 459.5 401.7 456.0 398.5 452.6 395.2 449.3 392.0 446.2 388.7 443.2 385.4 440.4 382.2 437.7 378.9 435.1 375.7 432.7 372.4 430.4 369.2 428.3 365.9 426.3 362.6 424.4 359.4 422.7 356.1 421.2 352.9 419.8 349.6 418.5 346.4 417.4 343.1 416.4 339.8 415.6 336.6 414.9 333.3 414.4 330.1 414.0 326.8 413.8 323.6 413.7 320.3 413.8 317.0 414.0 313.8 414.4 310.5 414.9 307.3 415.6 304.0 416.4 300.8 417.4 297.5 418.5 294.2 419.8 291.0 421.2 287.7 422.7 284.5 424.4 281.2 426.3 278.0 428.3 274.7 430.4 271.4 432.7 268.2 435.1 264.9 437.7 261.7 440.4 258.4 443.2 255.2 446.2 251.9 449.3 248.6 452.6 245.4 456.0 242.1 459.5 238.9 463.2 235.6 467.0 232.4 470.9 229.1 475.0 225.8 479.2 222.6 483.5 219.3 488.0 216.1 492.6 212.8 497.3 209.6 502.1 206.3 507.1 203.0 512.1 199.8 517.3 196.5 522.6 193.3 528.0 190.0 533.6 186.8 539.2 183.5 545.0 180.2 550.9 177.0 556.8 173.7 562.9 170.5 569.1 167.2 575.4 164.0 581.8 160.7 588.3 157.5 594.8 154.2 601.5 150.9 608.3 147.7 615.1 144.4 622.1 141.2 629.1 137.9 636.2 134.7 643.4 131.4 650.7 128.1 658.0 124.9 665.4 121.6 672.9 118.4 680.5 115.1 688.1 111.9 695.8 108.6 703.6 105.3 711.4 102.1 719.3 98.8 727.2 95.6 735.2 92.3 743.2 89.1 751.3 85.8 759.5 82.5 767.6 79.3 775.9 76.0 784.1 72.8 792.4 69.5 800.7 66.3 809.1 63.0 817.5 59.7 825.9 56.5 834.3 53.2 842.8 50.0 851.2 46.7 859.7 43.5 868.2 40.2 876.7 36.9 885.2 33.7 893.8 30.4 902.3 27.2"/><path d="M902.3 613.4 892.9 610.2 883.5 606.9 874.2 603.7 864.8 600.4 855.5 597.1 846.1 593.9 836.8 590.6 827.5 587.4 818.2 584.1 809.0 580.9 799.8 577.6 790.6 574.3 781.4 571.1 772.3 567.8 763.2 564.6 754.2 561.3 745.2 558.1 736.2 554.8 727.3 551.5 718.5 548.3 709.7 545.0 701.0 541.8 692.3 538.5 683.7 535.3 675.2 532.0 666.7 528.7 658.3 525.5 650.0 522.2 641.8 519.0 633.6 515.7 625.5 512.5 617.5 509.2 609.6 505.9 601.8 502.7 594.1 499.4 586.4 496.2 578.9 492.9 571.4 489.7 564.1 486.4 556.9 483.1 549.7 479.9 542.7 476.6 535.8 473.4 529.0 470.1 522.3 466.9 515.7 463.6 509.3 460.4 502.9 457.1 496.7 453.8 490.6 450.6 484.7 447.3 478.8 444.1 473.1 440.8 467.5 437.6 462.1 434.3 456.8 431.0 451.6 427.8 446.6 424.5 441.7 421.3 436.9 418.0 432.3 414.8 427.8 411.5 423.5 408.2 419.3 405.0 415.2 401.7 411.4 398.5 407.6 395.2 404.0 392.0 400.6 388.7 397.3 385.4 394.2 382.2 391.2 378.9 388.4 375.7 385.7 372.4 383.2 369.2 380.9 365.9 378.7 362.6 376.6 359.4 374.8 356.1 373.1 352.9 371.5 349.6 370.1 346.4 368.9 343.1 367.8 339.8 366.9 336.6 366.2 333.3 365.6 330.1 365.2 326.8 365.0 323.6 364.9 320.3 365.0 317.0 365.2 313.8 365.6 310.5 366.2 307.3 366.9 304.0 367.8 300.8 368.9 297.5 370.1 294.2 371.5 291.0 373.1 287.7 374.8 284.5 376.6 281.2 378.7 278.0 380.9 274.7 383.2 271.4 385.7 268.2 388.4 264.9 391.2 261.7 394.2 258.4 397.3 255.2 400.6 251.9 404.0 248.6 407.6 245.4 411.4 242.1 415.2 238.9 419.3 235.6 423.5 232.4 427.8 229.1 432.3 225.8 436.9 222.6 441.7 219.3 446.6 216.1 451.6 212.8 456.8 209.6 462.1 206.3 467.5 203.0 473.1 199.8 478.8 196.5 484.7 193.3 490.6 190.0 496.7 186.8 502.9 183.5 509.3 180.2 515.7 177.0 522.3 173.7 529.0 170.5 535.8 167.2 542.7 164.0 549.7 160.7 556.9 157.5 564.1 154.2 571.4 150.9 578.9 147.7 586.4 144.4 594.1 141.2 601.8 137.9 609.6 134.7 617.5 131.4 625.5 128.1 633.6 124.9 641.8 121.6 650.0 118.4 658.3 115.1 666.7 111.9 675.2 108.6 683.7 105.3 692.3 102.1 701.0 98.8 709.7 95.6 718.5 92.3 727.3 89.1 736.2 85.8 745.2 82.5 754.2 79.3 763.2 76.0 772.3 72.8 781.4 69.5 790.6 66.3 799.8 63.0 809.0 59.7 818.2 56.5 827.5 53.2 836.8 50.0 846.1 46.7 855.5 43.5 864.8 40.2 874.2 36.9 883.5 33.7 892.9 30.4 902.3 27.2"/><path d="M902.3 613.4 892.1 610.2 881.8 606.9 871.6 603.7 861.4 600.4 851.2 597.1 841.0 593.9 830.9 590.6 820.7 587.4 810.6 584.1 800.5 580.9 790.4 577.6 780.4 574.3 770.4 571.1 760.5 567.8 750.6 564.6 740.7 561.3 730.9 558.1 721.1 554.8 711.4 551.5 701.8 548.3 692.2 545.0 682.7 541.8 673.2 538.5 663.8 535.3 654.5 532.0 645.3 528.7 636.1 525.5 627.1 522.2 618.1 519.0 609.2 515.7 600.4 512.5 591.6 509.2 583.0 505.9 574.5 502.7 566.0 499.4 557.7 496.2 549.5 492.9 541.4 489.7 533.4 486.4 525.5 483.1 517.7 479.9 510.0 476.6 502.5 473.4 495.0 470.1 487.8 466.9 480.6 463.6 473.5 460.4 466.6 457.1 459.8 453.8 453.2 450.6 446.7 447.3 440.3 444.1 434.1 440.8 428.0 437.6 422.1 434.3 416.3 431.0 410.6 427.8 405.1 424.5 399.8 421.3 394.6 418.0 389.5 414.8 384.7 411.5 379.9 408.2 375.4 405.0 371.0 401.7 366.7 398.5 362.6 395.2 358.7 392.0 355.0 388.7 351.4 385.4 348.0 382.2 344.7 378.9 341.7 375.7 338.8 372.4 336.0 369.2 333.5 365.9 331.1 362.6 328.9 359.4 326.8 356.1 324.9 352.9 323.3 349.6 321.7 346.4 320.4 343.1 319.3 339.8 318.3 336.6 317.5 333.3 316.8 330.1 316.4 326.8 316.1 323.6 316.0 320.3 316.1 317.0 316.4 313.8 316.8 310.5 317.5 307.3 318.3 304.0 319.3 300.8 320.4 297.5 321.7 294.2 323.3 291.0 324.9 287.7 326.8 284.5 328.9 281.2 331.1 278.0 333.5 274.7 336.0 271.4 338.8 268.2 341.7 264.9 344.7 261.7 348.0 258.4 351.4 255.2 355.0 251.9 358.7 248.6 362.6 245.4 366.7 242.1 371.0 238.9 375.4 235.6 379.9 232.4 384.7 229.1 389.5 225.8 394.6 222.6 399.8 219.3 405.1 216.1 410.6 212.8 416.3 209.6 422.1 206.3 428.0 203.0 434.1 199.8 440.3 196.5 446.7 193.3 453.2 190.0 459.8 186.8 466.6 183.5 473.5 180.2 480.6 177.0 487.8 173.7 495.0 170.5 502.5 167.2 510.0 164.0 517.7 160.7 525.5 157.5 533.4 154.2 541.4 150.9 549.5 147.7 557.7 144.4 566.0 141.2 574.5 137.9 583.0 134.7 591.6 131.4 600.4 128.1 609.2 124.9 618.1 121.6 627.1 118.4 636.1 115.1 645.3 111.9 654.5 108.6 663.8 105.3 673.2 102.1 682.7 98.8 692.2 95.6 701.8 92.3 711.4 89.1 721.1 85.8 730.9 82.5 740.7 79.3 750.6 76.0 760.5 72.8 770.4 69.5 780.4 66.3 790.4 63.0 800.5 59.7 810.6 56.5 820.7 53.2 830.9 50.0 841.0 46.7 851.2 43.5 861.4 40.2 871.6 36.9 881.8 33.7 892.1 30.4 902.3 27.2"/><path d="M902.3 613.4 911.7 610.2 921.1 606.9 930.4 603.7 939.8 600.4 949.1 597.1 958.5 593.9 967.8 590.6 977.1 587.4 986.4 584.1 995.6 580.9 1004.8 577.6 1014.0 574.3 1023.2 571.1 1032.3 567.8 1041.4 564.6 1050.4 561.3 1059.4 558.1 1068.4 554.8 1077.3 551.5 1086.1 548.3 1094.9 545.0 1103.6 541.8 1112.3 538.5 1120.9 535.3 1129.4 532.0 1137.9 528.7 1146.3 525.5 1154.6 522.2 1162.8 519.0 1171.0 515.7 1179.1 512.5 1187.1 509.2 1195.0 505.9 1202.8 502.7 1210.5 499.4 1218.2 496.2 1225.7 492.9 1233.2 489.7 1240.5 486.4 1247.7 483.1 1254.9 479.9 1261.9 476.6 1268.8 473.4 1275.6 470.1 1282.3 466.9 1288.9 463.6 1295.3 460.4 1301.7 457.1 1307.9 453.8 1314.0 450.6 1319.9 447.3 1325.8 444.1 1331.5 440.8 1337.1 437.6 1342.5 434.3 1347.8 431.0 1353.0 427.8 1358.0 424.5 1362.9 421.3 1367.7 418.0 1372.3 414.8 1376.8 411.5 1381.1 408.2 1385.3 405.0 1389.4 401.7 1393.2 398.5 1397.0 395.2 1400.6 392.0 1404.0 388.7 1407.3 385.4 1410.4 382.2 1413.4 378.9 1416.2 375.7 1418.9 372.4 1421.4 369.2 1423.7 365.9 1425.9 362.6 1428.0 359.4 1429.8 356.1 1431.5 352.9 1433.1 349.6 1434.5 346.4 1435.7 343.1 1436.8 339.8 1437.7 336.6 1438.4 333.3 1439.0 330.1 1439.4 326.8 1439.6 323.6 1439.7 320.3 1439.6 317.0 1439.4 313.8 1439.0 310.5 1438.4 307.3 1437.7 304.0 1436.8 300.8 1435.7 297.5 1434.5 294.2 1433.1 291.0 1431.5 287.7 1429.8 284.5 1428.0 281.2 1425.9 278.0 1423.7 274.7 1421.4 271.4 1418.9 268.2 1416.2 264.9 1413.4 261.7 1410.4 258.4 1407.3 255.2 1404.0 251.9 1400.6 248.6 1397.0 245.4 1393.2 242.1 1389.4 238.9 1385.3 235.6 1381.1 232.4 1376.8 229.1 1372.3 225.8 1367.7 222.6 1362.9 219.3 1358.0 216.1 1353.0 212.8 1347.8 209.6 1342.5 206.3 1337.1 203.0 1331.5 199.8 1325.8 196.5 1319.9 193.3 1314.0 190.0 1307.9 186.8 1301.7 183.5 1295.3 180.2 1288.9 177.0 1282.3 173.7 1275.6 170.5 1268.8 167.2 1261.9 164.0 1254.9 160.7 1247.7 157.5 1240.5 154.2 1233.2 150.9 1225.7 147.7 1218.2 144.4 1210.5 141.2 1202.8 137.9 1195.0 134.7 1187.1 131.4 1179.1 128.1 1171.0 124.9 1162.8 121.6 1154.6 118.4 1146.3 115.1 1137.9 111.9 1129.4 108.6 1120.9 105.3 1112.3 102.1 1103.6 98.8 1094.9 95.6 1086.1 92.3 1077.3 89.1 1068.4 85.8 1059.4 82.5 1050.4 79.3 1041.4 76.0 1032.3 72.8 1023.2 69.5 1014.0 66.3 1004.8 63.0 995.6 59.7 986.4 56.5 977.1 53.2 967.8 50.0 958.5 46.7 949.1 43.5 939.8 40.2 930.4 36.9 921.1 33.7 911.7 30.4 902.3 27.2"/><path d="M902.3 613.4 910.8 610.2 919.4 606.9 927.9 603.7 936.4 600.4 944.9 597.1 953.4 593.9 961.8 590.6 970.3 587.4 978.7 584.1 987.1 580.9 995.5 577.6 1003.9 574.3 1012.2 571.1 1020.5 567.8 1028.7 564.6 1037.0 561.3 1045.1 558.1 1053.3 554.8 1061.4 551.5 1069.4 548.3 1077.4 545.0 1085.3 541.8 1093.2 538.5 1101.0 535.3 1108.8 532.0 1116.5 528.7 1124.1 525.5 1131.7 522.2 1139.2 519.0 1146.6 515.7 1153.9 512.5 1161.2 509.2 1168.4 505.9 1175.5 502.7 1182.5 499.4 1189.5 496.2 1196.3 492.9 1203.1 489.7 1209.8 486.4 1216.3 483.1 1222.8 479.9 1229.2 476.6 1235.5 473.4 1241.7 470.1 1247.8 466.9 1253.7 463.6 1259.6 460.4 1265.4 457.1 1271.0 453.8 1276.6 450.6 1282.0 447.3 1287.3 444.1 1292.5 440.8 1297.5 437.6 1302.5 434.3 1307.3 431.0 1312.0 427.8 1316.6 424.5 1321.1 421.3 1325.4 418.0 1329.6 414.8 1333.7 411.5 1337.6 408.2 1341.4 405.0 1345.1 401.7 1348.6 398.5 1352.0 395.2 1355.3 392.0 1358.4 388.7 1361.4 385.4 1364.2 382.2 1366.9 378.9 1369.5 375.7 1371.9 372.4 1374.2 369.2 1376.3 365.9 1378.3 362.6 1380.2 359.4 1381.9 356.1 1383.4 352.9 1384.8 349.6 1386.1 346.4 1387.2 343.1 1388.2 339.8 1389.0 336.6 1389.7 333.3 1390.2 330.1 1390.6 326.8 1390.8 323.6 1390.8 320.3 1390.8 317.0 1390.6 313.8 1390.2 310.5 1389.7 307.3 1389.0 304.0 1388.2 300.8 1387.2 297.5 1386.1 294.2 1384.8 291.0 1383.4 287.7 1381.9 284.5 1380.2 281.2 1378.3 278.0 1376.3 274.7 1374.2 271.4 1371.9 268.2 1369.5 264.9 1366.9 261.7 1364.2 258.4 1361.4 255.2 1358.4 251.9 1355.3 248.6 1352.0 245.4 1348.6 242.1 1345.1 238.9 1341.4 235.6 1337.6 232.4 1333.7 229.1 1329.6 225.8 1325.4 222.6 1321.1 219.3 1316.6 216.1 1312.0 212.8 1307.3 209.6 1302.5 206.3 1297.5 203.0 1292.5 199.8 1287.3 196.5 1282.0 193.3 1276.6 190.0 1271.0 186.8 1265.4 183.5 1259.6 180.2 1253.7 177.0 1247.8 173.7 1241.7 170.5 1235.5 167.2 1229.2 164.0 1222.8 160.7 1216.3 157.5 1209.8 154.2 1203.1 150.9 1196.3 147.7 1189.5 144.4 1182.5 141.2 1175.5 137.9 1168.4 134.7 1161.2 131.4 1153.9 128.1 1146.6 124.9 1139.2 121.6 1131.7 118.4 1124.1 115.1 1116.5 111.9 1108.8 108.6 1101.0 105.3 1093.2 102.1 1085.3 98.8 1077.4 95.6 1069.4 92.3 1061.4 89.1 1053.3 85.8 1045.1 82.5 1037.0 79.3 1028.7 76.0 1020.5 72.8 1012.2 69.5 1003.9 66.3 995.5 63.0 987.1 59.7 978.7 56.5 970.3 53.2 961.8 50.0 953.4 46.7 944.9 43.5 936.4 40.2 927.9 36.9 919.4 33.7 910.8 30.4 902.3 27.2"/><path d="M902.3 613.4 910.0 610.2 917.6 606.9 925.3 603.7 933.0 600.4 940.6 597.1 948.3 593.9 955.9 590.6 963.5 587.4 971.1 584.1 978.7 580.9 986.2 577.6 993.7 574.3 1001.2 571.1 1008.7 567.8 1016.1 564.6 1023.5 561.3 1030.9 558.1 1038.2 554.8 1045.5 551.5 1052.7 548.3 1059.9 545.0 1067.0 541.8 1074.1 538.5 1081.1 535.3 1088.1 532.0 1095.0 528.7 1101.9 525.5 1108.7 522.2 1115.5 519.0 1122.1 515.7 1128.8 512.5 1135.3 509.2 1141.8 505.9 1148.2 502.7 1154.5 499.4 1160.7 496.2 1166.9 492.9 1173.0 489.7 1179.0 486.4 1184.9 483.1 1190.8 479.9 1196.5 476.6 1202.2 473.4 1207.7 470.1 1213.2 466.9 1218.6 463.6 1223.9 460.4 1229.1 457.1 1234.1 453.8 1239.1 450.6 1244.0 447.3 1248.8 444.1 1253.5 440.8 1258.0 437.6 1262.5 434.3 1266.8 431.0 1271.1 427.8 1275.2 424.5 1279.2 421.3 1283.1 418.0 1286.9 414.8 1290.5 411.5 1294.1 408.2 1297.5 405.0 1300.8 401.7 1304.0 398.5 1307.0 395.2 1310.0 392.0 1312.8 388.7 1315.5 385.4 1318.0 382.2 1320.5 378.9 1322.8 375.7 1325.0 372.4 1327.0 369.2 1328.9 365.9 1330.7 362.6 1332.4 359.4 1333.9 356.1 1335.3 352.9 1336.6 349.6 1337.7 346.4 1338.7 343.1 1339.6 339.8 1340.3 336.6 1340.9 333.3 1341.4 330.1 1341.7 326.8 1341.9 323.6 1342.0 320.3 1341.9 317.0 1341.7 313.8 1341.4 310.5 1340.9 307.3 1340.3 304.0 1339.6 300.8 1338.7 297.5 1337.7 294.2 1336.6 291.0 1335.3 287.7 1333.9 284.5 1332.4 281.2 1330.7 278.0 1328.9 274.7 1327.0 271.4 1325.0 268.2 1322.8 264.9 1320.5 261.7 1318.0 258.4 1315.5 255.2 1312.8 251.9 1310.0 248.6 1307.0 245.4 1304.0 242.1 1300.8 238.9 1297.5 235.6 1294.1 232.4 1290.5 229.1 1286.9 225.8 1283.1 222.6 1279.2 219.3 1275.2 216.1 1271.1 212.8 1266.8 209.6 1262.5 206.3 1258.0 203.0 1253.5 199.8 1248.8 196.5 1244.0 193.3 1239.1 190.0 1234.1 186.8 1229.1 183.5 1223.9 180.2 1218.6 177.0 1213.2 173.7 1207.7 170.5 1202.2 167.2 1196.5 164.0 1190.8 160.7 1184.9 157.5 1179.0 154.2 1173.0 150.9 1166.9 147.7 1160.7 144.4 1154.5 141.2 1148.2 137.9 1141.8 134.7 1135.3 131.4 1128.8 128.1 1122.1 124.9 1115.5 121.6 1108.7 118.4 1101.9 115.1 1095.0 111.9 1088.1 108.6 1081.1 105.3 1074.1 102.1 1067.0 98.8 1059.9 95.6 1052.7 92.3 1045.5 89.1 1038.2 85.8 1030.9 82.5 1023.5 79.3 1016.1 76.0 1008.7 72.8 1001.2 69.5 993.7 66.3 986.2 63.0 978.7 59.7 971.1 56.5 963.5 53.2 955.9 50.0 948.3 46.7 940.6 43.5 933.0 40.2 925.3 36.9 917.6 33.7 910.0 30.4 902.3 27.2"/><path d="M902.3 613.4 909.1 610.2 915.9 606.9 922.8 603.7 929.6 600.4 936.4 597.1 943.2 593.9 949.9 590.6 956.7 587.4 963.4 584.1 970.2 580.9 976.9 577.6 983.6 574.3 990.2 571.1 996.9 567.8 1003.5 564.6 1010.0 561.3 1016.6 558.1 1023.1 554.8 1029.5 551.5 1036.0 548.3 1042.4 545.0 1048.7 541.8 1055.0 538.5 1061.3 535.3 1067.5 532.0 1073.6 528.7 1079.7 525.5 1085.8 522.2 1091.8 519.0 1097.7 515.7 1103.6 512.5 1109.4 509.2 1115.2 505.9 1120.9 502.7 1126.5 499.4 1132.0 496.2 1137.5 492.9 1142.9 489.7 1148.3 486.4 1153.5 483.1 1158.7 479.9 1163.8 476.6 1168.9 473.4 1173.8 470.1 1178.7 466.9 1183.4 463.6 1188.1 460.4 1192.8 457.1 1197.3 453.8 1201.7 450.6 1206.0 447.3 1210.3 444.1 1214.4 440.8 1218.5 437.6 1222.5 434.3 1226.3 431.0 1230.1 427.8 1233.8 424.5 1237.3 421.3 1240.8 418.0 1244.1 414.8 1247.4 411.5 1250.5 408.2 1253.6 405.0 1256.5 401.7 1259.4 398.5 1262.1 395.2 1264.7 392.0 1267.2 388.7 1269.6 385.4 1271.8 382.2 1274.0 378.9 1276.1 375.7 1278.0 372.4 1279.8 369.2 1281.5 365.9 1283.1 362.6 1284.6 359.4 1286.0 356.1 1287.2 352.9 1288.3 349.6 1289.3 346.4 1290.2 343.1 1291.0 339.8 1291.7 336.6 1292.2 333.3 1292.6 330.1 1292.9 326.8 1293.1 323.6 1293.1 320.3 1293.1 317.0 1292.9 313.8 1292.6 310.5 1292.2 307.3 1291.7 304.0 1291.0 300.8 1290.2 297.5 1289.3 294.2 1288.3 291.0 1287.2 287.7 1286.0 284.5 1284.6 281.2 1283.1 278.0 1281.5 274.7 1279.8 271.4 1278.0 268.2 1276.1 264.9 1274.0 261.7 1271.8 258.4 1269.6 255.2 1267.2 251.9 1264.7 248.6 1262.1 245.4 1259.4 242.1 1256.5 238.9 1253.6 235.6 1250.5 232.4 1247.4 229.1 1244.1 225.8 1240.8 222.6 1237.3 219.3 1233.8 216.1 1230.1 212.8 1226.3 209.6 1222.5 206.3 1218.5 203.0 1214.4 199.8 1210.3 196.5 1206.0 193.3 1201.7 190.0 1197.3 186.8 1192.8 183.5 1188.1 180.2 1183.4 177.0 1178.7 173.7 1173.8 170.5 1168.9 167.2 1163.8 164.0 1158.7 160.7 1153.5 157.5 1148.3 154.2 1142.9 150.9 1137.5 147.7 1132.0 144.4 1126.5 141.2 1120.9 137.9 1115.2 134.7 1109.4 131.4 1103.6 128.1 1097.7 124.9 1091.8 121.6 1085.8 118.4 1079.7 115.1 1073.6 111.9 1067.5 108.6 1061.3 105.3 1055.0 102.1 1048.7 98.8 1042.4 95.6 1036.0 92.3 1029.5 89.1 1023.1 85.8 1016.6 82.5 1010.0 79.3 1003.5 76.0 996.9 72.8 990.2 69.5 983.6 66.3 976.9 63.0 970.2 59.7 963.4 56.5 956.7 53.2 949.9 50.0 943.2 46.7 936.4 43.5 929.6 40.2 922.8 36.9 915.9 33.7 909.1 30.4 902.3 27.2"/><path d="M902.3 613.4 908.3 610.2 914.2 606.9 920.2 603.7 926.2 600.4 932.1 597.1 938.0 593.9 944.0 590.6 949.9 587.4 955.8 584.1 961.7 580.9 967.6 577.6 973.4 574.3 979.2 571.1 985.0 567.8 990.8 564.6 996.6 561.3 1002.3 558.1 1008.0 554.8 1013.6 551.5 1019.3 548.3 1024.9 545.0 1030.4 541.8 1035.9 538.5 1041.4 535.3 1046.8 532.0 1052.2 528.7 1057.6 525.5 1062.9 522.2 1068.1 519.0 1073.3 515.7 1078.4 512.5 1083.5 509.2 1088.6 505.9 1093.5 502.7 1098.5 499.4 1103.3 496.2 1108.1 492.9 1112.8 489.7 1117.5 486.4 1122.1 483.1 1126.7 479.9 1131.1 476.6 1135.5 473.4 1139.9 470.1 1144.1 466.9 1148.3 463.6 1152.4 460.4 1156.4 457.1 1160.4 453.8 1164.3 450.6 1168.1 447.3 1171.8 444.1 1175.4 440.8 1179.0 437.6 1182.4 434.3 1185.8 431.0 1189.1 427.8 1192.3 424.5 1195.4 421.3 1198.5 418.0 1201.4 414.8 1204.3 411.5 1207.0 408.2 1209.7 405.0 1212.2 401.7 1214.7 398.5 1217.1 395.2 1219.4 392.0 1221.6 388.7 1223.7 385.4 1225.7 382.2 1227.5 378.9 1229.3 375.7 1231.0 372.4 1232.6 369.2 1234.1 365.9 1235.5 362.6 1236.8 359.4 1238.0 356.1 1239.1 352.9 1240.1 349.6 1241.0 346.4 1241.7 343.1 1242.4 339.8 1243.0 336.6 1243.5 333.3 1243.8 330.1 1244.1 326.8 1244.2 323.6 1244.3 320.3 1244.2 317.0 1244.1 313.8 1243.8 310.5 1243.5 307.3 1243.0 304.0 1242.4 300.8 1241.7 297.5 1241.0 294.2 1240.1 291.0 1239.1 287.7 1238.0 284.5 1236.8 281.2 1235.5 278.0 1234.1 274.7 1232.6 271.4 1231.0 268.2 1229.3 264.9 1227.5 261.7 1225.7 258.4 1223.7 255.2 1221.6 251.9 1219.4 248.6 1217.1 245.4 1214.7 242.1 1212.2 238.9 1209.7 235.6 1207.0 232.4 1204.3 229.1 1201.4 225.8 1198.5 222.6 1195.4 219.3 1192.3 216.1 1189.1 212.8 1185.8 209.6 1182.4 206.3 1179.0 203.0 1175.4 199.8 1171.8 196.5 1168.1 193.3 1164.3 190.0 1160.4 186.8 1156.4 183.5 1152.4 180.2 1148.3 177.0 1144.1 173.7 1139.9 170.5 1135.5 167.2 1131.1 164.0 1126.7 160.7 1122.1 157.5 1117.5 154.2 1112.8 150.9 1108.1 147.7 1103.3 144.4 1098.5 141.2 1093.5 137.9 1088.6 134.7 1083.5 131.4 1078.4 128.1 1073.3 124.9 1068.1 121.6 1062.9 118.4 1057.6 115.1 1052.2 111.9 1046.8 108.6 1041.4 105.3 1035.9 102.1 1030.4 98.8 1024.9 95.6 1019.3 92.3 1013.6 89.1 1008.0 85.8 1002.3 82.5 996.6 79.3 990.8 76.0 985.0 72.8 979.2 69.5 973.4 66.3 967.6 63.0 961.7 59.7 955.8 56.5 949.9 53.2 944.0 50.0 938.0 46.7 932.1 43.5 926.2 40.2 920.2 36.9 914.2 33.7 908.3 30.4 902.3 27.2"/><path d="M902.3 613.4 907.4 610.2 912.5 606.9 917.6 603.7 922.7 600.4 927.8 597.1 932.9 593.9 938.0 590.6 943.1 587.4 948.2 584.1 953.2 580.9 958.2 577.6 963.2 574.3 968.2 571.1 973.2 567.8 978.2 564.6 983.1 561.3 988.0 558.1 992.9 554.8 997.7 551.5 1002.6 548.3 1007.3 545.0 1012.1 541.8 1016.8 538.5 1021.5 535.3 1026.2 532.0 1030.8 528.7 1035.4 525.5 1039.9 522.2 1044.4 519.0 1048.9 515.7 1053.3 512.5 1057.6 509.2 1062.0 505.9 1066.2 502.7 1070.4 499.4 1074.6 496.2 1078.7 492.9 1082.8 489.7 1086.8 486.4 1090.7 483.1 1094.6 479.9 1098.4 476.6 1102.2 473.4 1105.9 470.1 1109.6 466.9 1113.2 463.6 1116.7 460.4 1120.1 457.1 1123.5 453.8 1126.9 450.6 1130.1 447.3 1133.3 444.1 1136.4 440.8 1139.4 437.6 1142.4 434.3 1145.3 431.0 1148.1 427.8 1150.9 424.5 1153.6 421.3 1156.2 418.0 1158.7 414.8 1161.1 411.5 1163.5 408.2 1165.8 405.0 1168.0 401.7 1170.1 398.5 1172.1 395.2 1174.1 392.0 1176.0 388.7 1177.8 385.4 1179.5 382.2 1181.1 378.9 1182.6 375.7 1184.1 372.4 1185.4 369.2 1186.7 365.9 1187.9 362.6 1189.0 359.4 1190.0 356.1 1191.0 352.9 1191.8 349.6 1192.6 346.4 1193.2 343.1 1193.8 339.8 1194.3 336.6 1194.7 333.3 1195.0 330.1 1195.3 326.8 1195.4 323.6 1195.4 320.3 1195.4 317.0 1195.3 313.8 1195.0 310.5 1194.7 307.3 1194.3 304.0 1193.8 300.8 1193.2 297.5 1192.6 294.2 1191.8 291.0 1191.0 287.7 1190.0 284.5 1189.0 281.2 1187.9 278.0 1186.7 274.7 1185.4 271.4 1184.1 268.2 1182.6 264.9 1181.1 261.7 1179.5 258.4 1177.8 255.2 1176.0 251.9 1174.1 248.6 1172.1 245.4 1170.1 242.1 1168.0 238.9 1165.8 235.6 1163.5 232.4 1161.1 229.1 1158.7 225.8 1156.2 222.6 1153.6 219.3 1150.9 216.1 1148.1 212.8 1145.3 209.6 1142.4 206.3 1139.4 203.0 1136.4 199.8 1133.3 196.5 1130.1 193.3 1126.9 190.0 1123.5 186.8 1120.1 183.5 1116.7 180.2 1113.2 177.0 1109.6 173.7 1105.9 170.5 1102.2 167.2 1098.4 164.0 1094.6 160.7 1090.7 157.5 1086.8 154.2 1082.8 150.9 1078.7 147.7 1074.6 144.4 1070.4 141.2 1066.2 137.9 1062.0 134.7 1057.6 131.4 1053.3 128.1 1048.9 124.9 1044.4 121.6 1039.9 118.4 1035.4 115.1 1030.8 111.9 1026.2 108.6 1021.5 105.3 1016.8 102.1 1012.1 98.8 1007.3 95.6 1002.6 92.3 997.7 89.1 992.9 85.8 988.0 82.5 983.1 79.3 978.2 76.0 973.2 72.8 968.2 69.5 963.2 66.3 958.2 63.0 953.2 59.7 948.2 56.5 943.1 53.2 938.0 50.0 932.9 46.7 927.8 43.5 922.7 40.2 917.6 36.9 912.5 33.7 907.4 30.4 902.3 27.2"/><path d="M902.3 613.4 906.6 610.2 910.8 606.9 915.1 603.7 919.3 600.4 923.6 597.1 927.8 593.9 932.1 590.6 936.3 587.4 940.5 584.1 944.7 580.9 948.9 577.6 953.1 574.3 957.2 571.1 961.4 567.8 965.5 564.6 969.6 561.3 973.7 558.1 977.8 554.8 981.8 551.5 985.8 548.3 989.8 545.0 993.8 541.8 997.7 538.5 1001.7 535.3 1005.5 532.0 1009.4 528.7 1013.2 525.5 1017.0 522.2 1020.7 519.0 1024.4 515.7 1028.1 512.5 1031.7 509.2 1035.3 505.9 1038.9 502.7 1042.4 499.4 1045.9 496.2 1049.3 492.9 1052.7 489.7 1056.0 486.4 1059.3 483.1 1062.6 479.9 1065.8 476.6 1068.9 473.4 1072.0 470.1 1075.0 466.9 1078.0 463.6 1081.0 460.4 1083.8 457.1 1086.7 453.8 1089.4 450.6 1092.1 447.3 1094.8 444.1 1097.4 440.8 1099.9 437.6 1102.4 434.3 1104.8 431.0 1107.2 427.8 1109.5 424.5 1111.7 421.3 1113.8 418.0 1115.9 414.8 1118.0 411.5 1120.0 408.2 1121.9 405.0 1123.7 401.7 1125.5 398.5 1127.2 395.2 1128.8 392.0 1130.4 388.7 1131.8 385.4 1133.3 382.2 1134.6 378.9 1135.9 375.7 1137.1 372.4 1138.3 369.2 1139.3 365.9 1140.3 362.6 1141.2 359.4 1142.1 356.1 1142.9 352.9 1143.6 349.6 1144.2 346.4 1144.8 343.1 1145.2 339.8 1145.6 336.6 1146.0 333.3 1146.2 330.1 1146.4 326.8 1146.5 323.6 1146.6 320.3 1146.5 317.0 1146.4 313.8 1146.2 310.5 1146.0 307.3 1145.6 304.0 1145.2 300.8 1144.8 297.5 1144.2 294.2 1143.6 291.0 1142.9 287.7 1142.1 284.5 1141.2 281.2 1140.3 278.0 1139.3 274.7 1138.3 271.4 1137.1 268.2 1135.9 264.9 1134.6 261.7 1133.3 258.4 1131.8 255.2 1130.4 251.9 1128.8 248.6 1127.2 245.4 1125.5 242.1 1123.7 238.9 1121.9 235.6 1120.0 232.4 1118.0 229.1 1115.9 225.8 1113.8 222.6 1111.7 219.3 1109.5 216.1 1107.2 212.8 1104.8 209.6 1102.4 206.3 1099.9 203.0 1097.4 199.8 1094.8 196.5 1092.1 193.3 1089.4 190.0 1086.7 186.8 1083.8 183.5 1081.0 180.2 1078.0 177.0 1075.0 173.7 1072.0 170.5 1068.9 167.2 1065.8 164.0 1062.6 160.7 1059.3 157.5 1056.0 154.2 1052.7 150.9 1049.3 147.7 1045.9 144.4 1042.4 141.2 1038.9 137.9 1035.3 134.7 1031.7 131.4 1028.1 128.1 1024.4 124.9 1020.7 121.6 1017.0 118.4 1013.2 115.1 1009.4 111.9 1005.5 108.6 1001.7 105.3 997.7 102.1 993.8 98.8 989.8 95.6 985.8 92.3 981.8 89.1 977.8 85.8 973.7 82.5 969.6 79.3 965.5 76.0 961.4 72.8 957.2 69.5 953.1 66.3 948.9 63.0 944.7 59.7 940.5 56.5 936.3 53.2 932.1 50.0 927.8 46.7 923.6 43.5 919.3 40.2 915.1 36.9 910.8 33.7 906.6 30.4 902.3 27.2"/><path d="M902.3 613.4 905.7 610.2 909.1 606.9 912.5 603.7 915.9 600.4 919.3 597.1 922.7 593.9 926.1 590.6 929.5 587.4 932.9 584.1 936.2 580.9 939.6 577.6 942.9 574.3 946.3 571.1 949.6 567.8 952.9 564.6 956.2 561.3 959.4 558.1 962.7 554.8 965.9 551.5 969.1 548.3 972.3 545.0 975.5 541.8 978.7 538.5 981.8 535.3 984.9 532.0 988.0 528.7 991.0 525.5 994.0 522.2 997.0 519.0 1000.0 515.7 1002.9 512.5 1005.9 509.2 1008.7 505.9 1011.6 502.7 1014.4 499.4 1017.2 496.2 1019.9 492.9 1022.6 489.7 1025.3 486.4 1027.9 483.1 1030.5 479.9 1033.1 476.6 1035.6 473.4 1038.1 470.1 1040.5 466.9 1042.9 463.6 1045.2 460.4 1047.5 457.1 1049.8 453.8 1052.0 450.6 1054.2 447.3 1056.3 444.1 1058.4 440.8 1060.4 437.6 1062.4 434.3 1064.3 431.0 1066.2 427.8 1068.0 424.5 1069.8 421.3 1071.5 418.0 1073.2 414.8 1074.8 411.5 1076.4 408.2 1077.9 405.0 1079.4 401.7 1080.8 398.5 1082.2 395.2 1083.5 392.0 1084.7 388.7 1085.9 385.4 1087.1 382.2 1088.2 378.9 1089.2 375.7 1090.1 372.4 1091.1 369.2 1091.9 365.9 1092.7 362.6 1093.4 359.4 1094.1 356.1 1094.8 352.9 1095.3 349.6 1095.8 346.4 1096.3 343.1 1096.6 339.8 1097.0 336.6 1097.2 333.3 1097.5 330.1 1097.6 326.8 1097.7 323.6 1097.7 320.3 1097.7 317.0 1097.6 313.8 1097.5 310.5 1097.2 307.3 1097.0 304.0 1096.6 300.8 1096.3 297.5 1095.8 294.2 1095.3 291.0 1094.8 287.7 1094.1 284.5 1093.4 281.2 1092.7 278.0 1091.9 274.7 1091.1 271.4 1090.1 268.2 1089.2 264.9 1088.2 261.7 1087.1 258.4 1085.9 255.2 1084.7 251.9 1083.5 248.6 1082.2 245.4 1080.8 242.1 1079.4 238.9 1077.9 235.6 1076.4 232.4 1074.8 229.1 1073.2 225.8 1071.5 222.6 1069.8 219.3 1068.0 216.1 1066.2 212.8 1064.3 209.6 1062.4 206.3 1060.4 203.0 1058.4 199.8 1056.3 196.5 1054.2 193.3 1052.0 190.0 1049.8 186.8 1047.5 183.5 1045.2 180.2 1042.9 177.0 1040.5 173.7 1038.1 170.5 1035.6 167.2 1033.1 164.0 1030.5 160.7 1027.9 157.5 1025.3 154.2 1022.6 150.9 1019.9 147.7 1017.2 144.4 1014.4 141.2 1011.6 137.9 1008.7 134.7 1005.9 131.4 1002.9 128.1 1000.0 124.9 997.0 121.6 994.0 118.4 991.0 115.1 988.0 111.9 984.9 108.6 981.8 105.3 978.7 102.1 975.5 98.8 972.3 95.6 969.1 92.3 965.9 89.1 962.7 85.8 959.4 82.5 956.2 79.3 952.9 76.0 949.6 72.8 946.3 69.5 942.9 66.3 939.6 63.0 936.2 59.7 932.9 56.5 929.5 53.2 926.1 50.0 922.7 46.7 919.3 43.5 915.9 40.2 912.5 36.9 909.1 33.7 905.7 30.4 902.3 27.2"/><path d="M902.3 613.4 904.9 610.2 907.4 606.9 910.0 603.7 912.5 600.4 915.1 597.1 917.6 593.9 920.2 590.6 922.7 587.4 925.2 584.1 927.8 580.9 930.3 577.6 932.8 574.3 935.3 571.1 937.8 567.8 940.2 564.6 942.7 561.3 945.2 558.1 947.6 554.8 950.0 551.5 952.4 548.3 954.8 545.0 957.2 541.8 959.6 538.5 961.9 535.3 964.2 532.0 966.5 528.7 968.8 525.5 971.1 522.2 973.4 519.0 975.6 515.7 977.8 512.5 980.0 509.2 982.1 505.9 984.3 502.7 986.4 499.4 988.4 496.2 990.5 492.9 992.5 489.7 994.5 486.4 996.5 483.1 998.5 479.9 1000.4 476.6 1002.3 473.4 1004.1 470.1 1005.9 466.9 1007.7 463.6 1009.5 460.4 1011.2 457.1 1012.9 453.8 1014.6 450.6 1016.2 447.3 1017.8 444.1 1019.4 440.8 1020.9 437.6 1022.4 434.3 1023.8 431.0 1025.2 427.8 1026.6 424.5 1027.9 421.3 1029.2 418.0 1030.5 414.8 1031.7 411.5 1032.9 408.2 1034.0 405.0 1035.1 401.7 1036.2 398.5 1037.2 395.2 1038.2 392.0 1039.1 388.7 1040.0 385.4 1040.9 382.2 1041.7 378.9 1042.5 375.7 1043.2 372.4 1043.9 369.2 1044.5 365.9 1045.1 362.6 1045.7 359.4 1046.2 356.1 1046.6 352.9 1047.1 349.6 1047.4 346.4 1047.8 343.1 1048.1 339.8 1048.3 336.6 1048.5 333.3 1048.7 330.1 1048.8 326.8 1048.8 323.6 1048.9 320.3 1048.8 317.0 1048.8 313.8 1048.7 310.5 1048.5 307.3 1048.3 304.0 1048.1 300.8 1047.8 297.5 1047.4 294.2 1047.1 291.0 1046.6 287.7 1046.2 284.5 1045.7 281.2 1045.1 278.0 1044.5 274.7 1043.9 271.4 1043.2 268.2 1042.5 264.9 1041.7 261.7 1040.9 258.4 1040.0 255.2 1039.1 251.9 1038.2 248.6 1037.2 245.4 1036.2 242.1 1035.1 238.9 1034.0 235.6 1032.9 232.4 1031.7 229.1 1030.5 225.8 1029.2 222.6 1027.9 219.3 1026.6 216.1 1025.2 212.8 1023.8 209.6 1022.4 206.3 1020.9 203.0 1019.4 199.8 1017.8 196.5 1016.2 193.3 1014.6 190.0 1012.9 186.8 1011.2 183.5 1009.5 180.2 1007.7 177.0 1005.9 173.7 1004.1 170.5 1002.3 167.2 1000.4 164.0 998.5 160.7 996.5 157.5 994.5 154.2 992.5 150.9 990.5 147.7 988.4 144.4 986.4 141.2 984.3 137.9 982.1 134.7 980.0 131.4 977.8 128.1 975.6 124.9 973.4 121.6 971.1 118.4 968.8 115.1 966.5 111.9 964.2 108.6 961.9 105.3 959.6 102.1 957.2 98.8 954.8 95.6 952.4 92.3 950.0 89.1 947.6 85.8 945.2 82.5 942.7 79.3 940.2 76.0 937.8 72.8 935.3 69.5 932.8 66.3 930.3 63.0 927.8 59.7 925.2 56.5 922.7 53.2 920.2 50.0 917.6 46.7 915.1 43.5 912.5 40.2 910.0 36.9 907.4 33.7 904.9 30.4 902.3 27.2"/><path d="M902.3 613.4 904.0 610.2 905.7 606.9 907.4 603.7 909.1 600.4 910.8 597.1 912.5 593.9 914.2 590.6 915.9 587.4 917.6 584.1 919.3 580.9 920.9 577.6 922.6 574.3 924.3 571.1 925.9 567.8 927.6 564.6 929.2 561.3 930.9 558.1 932.5 554.8 934.1 551.5 935.7 548.3 937.3 545.0 938.9 541.8 940.5 538.5 942.0 535.3 943.6 532.0 945.1 528.7 946.7 525.5 948.2 522.2 949.7 519.0 951.2 515.7 952.6 512.5 954.1 509.2 955.5 505.9 956.9 502.7 958.3 499.4 959.7 496.2 961.1 492.9 962.5 489.7 963.8 486.4 965.1 483.1 966.4 479.9 967.7 476.6 968.9 473.4 970.2 470.1 971.4 466.9 972.6 463.6 973.8 460.4 974.9 457.1 976.0 453.8 977.2 450.6 978.2 447.3 979.3 444.1 980.3 440.8 981.3 437.6 982.3 434.3 983.3 431.0 984.2 427.8 985.2 424.5 986.1 421.3 986.9 418.0 987.8 414.8 988.6 411.5 989.4 408.2 990.1 405.0 990.9 401.7 991.6 398.5 992.2 395.2 992.9 392.0 993.5 388.7 994.1 385.4 994.7 382.2 995.2 378.9 995.7 375.7 996.2 372.4 996.7 369.2 997.1 365.9 997.5 362.6 997.9 359.4 998.2 356.1 998.5 352.9 998.8 349.6 999.1 346.4 999.3 343.1 999.5 339.8 999.6 336.6 999.8 333.3 999.9 330.1 1000.0 326.8 1000.0 323.6 1000.0 320.3 1000.0 317.0 1000.0 313.8 999.9 310.5 999.8 307.3 999.6 304.0 999.5 300.8 999.3 297.5 999.1 294.2 998.8 291.0 998.5 287.7 998.2 284.5 997.9 281.2 997.5 278.0 997.1 274.7 996.7 271.4 996.2 268.2 995.7 264.9 995.2 261.7 994.7 258.4 994.1 255.2 993.5 251.9 992.9 248.6 992.2 245.4 991.6 242.1 990.9 238.9 990.1 235.6 989.4 232.4 988.6 229.1 987.8 225.8 986.9 222.6 986.1 219.3 985.2 216.1 984.2 212.8 983.3 209.6 982.3 206.3 981.3 203.0 980.3 199.8 979.3 196.5 978.2 193.3 977.2 190.0 976.0 186.8 974.9 183.5 973.8 180.2 972.6 177.0 971.4 173.7 970.2 170.5 968.9 167.2 967.7 164.0 966.4 160.7 965.1 157.5 963.8 154.2 962.5 150.9 961.1 147.7 959.7 144.4 958.3 141.2 956.9 137.9 955.5 134.7 954.1 131.4 952.6 128.1 951.2 124.9 949.7 121.6 948.2 118.4 946.7 115.1 945.1 111.9 943.6 108.6 942.0 105.3 940.5 102.1 938.9 98.8 937.3 95.6 935.7 92.3 934.1 89.1 932.5 85.8 930.9 82.5 929.2 79.3 927.6 76.0 925.9 72.8 924.3 69.5 922.6 66.3 920.9 63.0 919.3 59.7 917.6 56.5 915.9 53.2 914.2 50.0 912.5 46.7 910.8 43.5 909.1 40.2 907.4 36.9 905.7 33.7 904.0 30.4 902.3 27.2"/><path d="M902.3 613.4 903.2 610.2 904.0 606.9 904.9 603.7 905.7 600.4 906.6 597.1 907.4 593.9 908.3 590.6 909.1 587.4 909.9 584.1 910.8 580.9 911.6 577.6 912.5 574.3 913.3 571.1 914.1 567.8 914.9 564.6 915.8 561.3 916.6 558.1 917.4 554.8 918.2 551.5 919.0 548.3 919.8 545.0 920.6 541.8 921.4 538.5 922.2 535.3 922.9 532.0 923.7 528.7 924.5 525.5 925.2 522.2 926.0 519.0 926.7 515.7 927.5 512.5 928.2 509.2 928.9 505.9 929.6 502.7 930.3 499.4 931.0 496.2 931.7 492.9 932.4 489.7 933.0 486.4 933.7 483.1 934.4 479.9 935.0 476.6 935.6 473.4 936.2 470.1 936.8 466.9 937.4 463.6 938.0 460.4 938.6 457.1 939.2 453.8 939.7 450.6 940.3 447.3 940.8 444.1 941.3 440.8 941.8 437.6 942.3 434.3 942.8 431.0 943.3 427.8 943.7 424.5 944.2 421.3 944.6 418.0 945.0 414.8 945.4 411.5 945.8 408.2 946.2 405.0 946.6 401.7 946.9 398.5 947.3 395.2 947.6 392.0 947.9 388.7 948.2 385.4 948.5 382.2 948.8 378.9 949.0 375.7 949.3 372.4 949.5 369.2 949.7 365.9 949.9 362.6 950.1 359.4 950.3 356.1 950.4 352.9 950.6 349.6 950.7 346.4 950.8 343.1 950.9 339.8 951.0 336.6 951.0 333.3 951.1 330.1 951.1 326.8 951.1 323.6 951.2 320.3 951.1 317.0 951.1 313.8 951.1 310.5 951.0 307.3 951.0 304.0 950.9 300.8 950.8 297.5 950.7 294.2 950.6 291.0 950.4 287.7 950.3 284.5 950.1 281.2 949.9 278.0 949.7 274.7 949.5 271.4 949.3 268.2 949.0 264.9 948.8 261.7 948.5 258.4 948.2 255.2 947.9 251.9 947.6 248.6 947.3 245.4 946.9 242.1 946.6 238.9 946.2 235.6 945.8 232.4 945.4 229.1 945.0 225.8 944.6 222.6 944.2 219.3 943.7 216.1 943.3 212.8 942.8 209.6 942.3 206.3 941.8 203.0 941.3 199.8 940.8 196.5 940.3 193.3 939.7 190.0 939.2 186.8 938.6 183.5 938.0 180.2 937.4 177.0 936.8 173.7 936.2 170.5 935.6 167.2 935.0 164.0 934.4 160.7 933.7 157.5 933.0 154.2 932.4 150.9 931.7 147.7 931.0 144.4 930.3 141.2 929.6 137.9 928.9 134.7 928.2 131.4 927.5 128.1 926.7 124.9 926.0 121.6 925.2 118.4 924.5 115.1 923.7 111.9 922.9 108.6 922.2 105.3 921.4 102.1 920.6 98.8 919.8 95.6 919.0 92.3 918.2 89.1 917.4 85.8 916.6 82.5 915.8 79.3 914.9 76.0 914.1 72.8 913.3 69.5 912.5 66.3 911.6 63.0 910.8 59.7 909.9 56.5 909.1 53.2 908.3 50.0 907.4 46.7 906.6 43.5 905.7 40.2 904.9 36.9 904.0 33.7 903.2 30.4 902.3 27.2"/><path d="M902.3 613.4 912.5 610.2 922.8 606.9 933.0 603.7 943.2 600.4 953.4 597.1 963.6 593.9 973.7 590.6 983.9 587.4 994.0 584.1 1004.1 580.9 1014.2 577.6 1024.2 574.3 1034.2 571.1 1044.1 567.8 1054.0 564.6 1063.9 561.3 1073.7 558.1 1083.5 554.8 1093.2 551.5 1102.8 548.3 1112.4 545.0 1121.9 541.8 1131.4 538.5 1140.8 535.3 1150.1 532.0 1159.3 528.7 1168.5 525.5 1177.5 522.2 1186.5 519.0 1195.4 515.7 1204.2 512.5 1213.0 509.2 1221.6 505.9 1230.1 502.7 1238.6 499.4 1246.9 496.2 1255.1 492.9 1263.2 489.7 1271.2 486.4 1279.1 483.1 1286.9 479.9 1294.6 476.6 1302.1 473.4 1309.6 470.1 1316.8 466.9 1324.0 463.6 1331.1 460.4 1338.0 457.1 1344.8 453.8 1351.4 450.6 1357.9 447.3 1364.3 444.1 1370.5 440.8 1376.6 437.6 1382.5 434.3 1388.3 431.0 1394.0 427.8 1399.5 424.5 1404.8 421.3 1410.0 418.0 1415.1 414.8 1419.9 411.5 1424.7 408.2 1429.2 405.0 1433.6 401.7 1437.9 398.5 1442.0 395.2 1445.9 392.0 1449.6 388.7 1453.2 385.4 1456.6 382.2 1459.9 378.9 1462.9 375.7 1465.8 372.4 1468.6 369.2 1471.1 365.9 1473.5 362.6 1475.7 359.4 1477.8 356.1 1479.7 352.9 1481.3 349.6 1482.9 346.4 1484.2 343.1 1485.3 339.8 1486.3 336.6 1487.1 333.3 1487.8 330.1 1488.2 326.8 1488.5 323.6 1488.6 320.3 1488.5 317.0 1488.2 313.8 1487.8 310.5 1487.1 307.3 1486.3 304.0 1485.3 300.8 1484.2 297.5 1482.9 294.2 1481.3 291.0 1479.7 287.7 1477.8 284.5 1475.7 281.2 1473.5 278.0 1471.1 274.7 1468.6 271.4 1465.8 268.2 1462.9 264.9 1459.9 261.7 1456.6 258.4 1453.2 255.2 1449.6 251.9 1445.9 248.6 1442.0 245.4 1437.9 242.1 1433.6 238.9 1429.2 235.6 1424.7 232.4 1419.9 229.1 1415.1 225.8 1410.0 222.6 1404.8 219.3 1399.5 216.1 1394.0 212.8 1388.3 209.6 1382.5 206.3 1376.6 203.0 1370.5 199.8 1364.3 196.5 1357.9 193.3 1351.4 190.0 1344.8 186.8 1338.0 183.5 1331.1 180.2 1324.0 177.0 1316.8 173.7 1309.6 170.5 1302.1 167.2 1294.6 164.0 1286.9 160.7 1279.1 157.5 1271.2 154.2 1263.2 150.9 1255.1 147.7 1246.9 144.4 1238.6 141.2 1230.1 137.9 1221.6 134.7 1213.0 131.4 1204.2 128.1 1195.4 124.9 1186.5 121.6 1177.5 118.4 1168.5 115.1 1159.3 111.9 1150.1 108.6 1140.8 105.3 1131.4 102.1 1121.9 98.8 1112.4 95.6 1102.8 92.3 1093.2 89.1 1083.5 85.8 1073.7 82.5 1063.9 79.3 1054.0 76.0 1044.1 72.8 1034.2 69.5 1024.2 66.3 1014.2 63.0 1004.1 59.7 994.0 56.5 983.9 53.2 973.7 50.0 963.6 46.7 953.4 43.5 943.2 40.2 933.0 36.9 922.8 33.7 912.5 30.4 902.3 27.2"/><path d="M1054.0 564.6 1052.3 564.6 1050.7 564.6 1049.0 564.6 1047.3 564.6 1045.6 564.6 1043.9 564.6 1042.2 564.6 1040.5 564.6 1038.9 564.6 1037.2 564.6 1035.5 564.6 1033.8 564.6 1032.1 564.6 1030.4 564.6 1028.7 564.6 1027.1 564.6 1025.4 564.6 1023.7 564.6 1022.0 564.6 1020.3 564.6 1018.6 564.6 1016.9 564.6 1015.3 564.6 1013.6 564.6 1011.9 564.6 1010.2 564.6 1008.5 564.6 1006.8 564.6 1005.1 564.6 1003.5 564.6 1001.8 564.6 1000.1 564.6 998.4 564.6 996.7 564.6 995.0 564.6 993.3 564.6 991.7 564.6 990.0 564.6 988.3 564.6 986.6 564.6 984.9 564.6 983.2 564.6 981.5 564.6 979.9 564.6 978.2 564.6 976.5 564.6 974.8 564.6 973.1 564.6 971.4 564.6 969.7 564.6 968.1 564.6 966.4 564.6 964.7 564.6 963.0 564.6 961.3 564.6 959.6 564.6 957.9 564.6 956.3 564.6 954.6 564.6 952.9 564.6 951.2 564.6 949.5 564.6 947.8 564.6 946.1 564.6 944.4 564.6 942.8 564.6 941.1 564.6 939.4 564.6 937.7 564.6 936.0 564.6 934.3 564.6 932.6 564.6 931.0 564.6 929.3 564.6 927.6 564.6 925.9 564.6 924.2 564.6 922.5 564.6 920.8 564.6 919.2 564.6 917.5 564.6 915.8 564.6 914.1 564.6 912.4 564.6 910.7 564.6 909.0 564.6 907.4 564.6 905.7 564.6 904.0 564.6 902.3 564.6 900.6 564.6 898.9 564.6 897.2 564.6 895.6 564.6 893.9 564.6 892.2 564.6 890.5 564.6 888.8 564.6 887.1 564.6 885.4 564.6 883.8 564.6 882.1 564.6 880.4 564.6 878.7 564.6 877.0 564.6 875.3 564.6 873.6 564.6 872.0 564.6 870.3 564.6 868.6 564.6 866.9 564.6 865.2 564.6 863.5 564.6 861.8 564.6 860.2 564.6 858.5 564.6 856.8 564.6 855.1 564.6 853.4 564.6 851.7 564.6 850.0 564.6 848.3 564.6 846.7 564.6 845.0 564.6 843.3 564.6 841.6 564.6 839.9 564.6 838.2 564.6 836.5 564.6 834.9 564.6 833.2 564.6 831.5 564.6 829.8 564.6 828.1 564.6 826.4 564.6 824.7 564.6 823.1 564.6 821.4 564.6 819.7 564.6 818.0 564.6 816.3 564.6 814.6 564.6 812.9 564.6 811.3 564.6 809.6 564.6 807.9 564.6 806.2 564.6 804.5 564.6 802.8 564.6 801.1 564.6 799.5 564.6 797.8 564.6 796.1 564.6 794.4 564.6 792.7 564.6 791.0 564.6 789.3 564.6 787.7 564.6 786.0 564.6 784.3 564.6 782.6 564.6 780.9 564.6 779.2 564.6 777.5 564.6 775.9 564.6 774.2 564.6 772.5 564.6 770.8 564.6 769.1 564.6 767.4 564.6 765.7 564.6 764.1 564.6 762.4 564.6 760.7 564.6 759.0 564.6 757.3 564.6 755.6 564.6 753.9 564.6 752.3 564.6 750.6 564.6"/><path d="M1195.4 515.7 1192.2 515.7 1188.9 515.7 1185.7 515.7 1182.4 515.7 1179.1 515.7 1175.9 515.7 1172.6 515.7 1169.4 515.7 1166.1 515.7 1162.9 515.7 1159.6 515.7 1156.3 515.7 1153.1 515.7 1149.8 515.7 1146.6 515.7 1143.3 515.7 1140.1 515.7 1136.8 515.7 1133.5 515.7 1130.3 515.7 1127.0 515.7 1123.8 515.7 1120.5 515.7 1117.3 515.7 1114.0 515.7 1110.7 515.7 1107.5 515.7 1104.2 515.7 1101.0 515.7 1097.7 515.7 1094.5 515.7 1091.2 515.7 1087.9 515.7 1084.7 515.7 1081.4 515.7 1078.2 515.7 1074.9 515.7 1071.7 515.7 1068.4 515.7 1065.2 515.7 1061.9 515.7 1058.6 515.7 1055.4 515.7 1052.1 515.7 1048.9 515.7 1045.6 515.7 1042.4 515.7 1039.1 515.7 1035.8 515.7 1032.6 515.7 1029.3 515.7 1026.1 515.7 1022.8 515.7 1019.6 515.7 1016.3 515.7 1013.0 515.7 1009.8 515.7 1006.5 515.7 1003.3 515.7 1000.0 515.7 996.8 515.7 993.5 515.7 990.2 515.7 987.0 515.7 983.7 515.7 980.5 515.7 977.2 515.7 974.0 515.7 970.7 515.7 967.4 515.7 964.2 515.7 960.9 515.7 957.7 515.7 954.4 515.7 951.2 515.7 947.9 515.7 944.6 515.7 941.4 515.7 938.1 515.7 934.9 515.7 931.6 515.7 928.4 515.7 925.1 515.7 921.8 515.7 918.6 515.7 915.3 515.7 912.1 515.7 908.8 515.7 905.6 515.7 902.3 515.7 899.0 515.7 895.8 515.7 892.5 515.7 889.3 515.7 886.0 515.7 882.8 515.7 879.5 515.7 876.2 515.7 873.0 515.7 869.7 515.7 866.5 515.7 863.2 515.7 860.0 515.7 856.7 515.7 853.4 515.7 850.2 515.7 846.9 515.7 843.7 515.7 840.4 515.7 837.2 515.7 833.9 515.7 830.6 515.7 827.4 515.7 824.1 515.7 820.9 515.7 817.6 515.7 814.4 515.7 811.1 515.7 807.8 515.7 804.6 515.7 801.3 515.7 798.1 515.7 794.8 515.7 791.6 515.7 788.3 515.7 785.0 515.7 781.8 515.7 778.5 515.7 775.3 515.7 772.0 515.7 768.8 515.7 765.5 515.7 762.2 515.7 759.0 515.7 755.7 515.7 752.5 515.7 749.2 515.7 746.0 515.7 742.7 515.7 739.4 515.7 736.2 515.7 732.9 515.7 729.7 515.7 726.4 515.7 723.2 515.7 719.9 515.7 716.7 515.7 713.4 515.7 710.1 515.7 706.9 515.7 703.6 515.7 700.4 515.7 697.1 515.7 693.9 515.7 690.6 515.7 687.3 515.7 684.1 515.7 680.8 515.7 677.6 515.7 674.3 515.7 671.1 515.7 667.8 515.7 664.5 515.7 661.3 515.7 658.0 515.7 654.8 515.7 651.5 515.7 648.3 515.7 645.0 515.7 641.7 515.7 638.5 515.7 635.2 515.7 632.0 515.7 628.7 515.7 625.5 515.7 622.2 515.7 618.9 515.7 615.7 515.7 612.4 515.7 609.2 515.7"/><path d="M1316.8 466.9 1312.2 466.9 1307.6 466.9 1303.0 466.9 1298.4 466.9 1293.8 466.9 1289.2 466.9 1284.6 466.9 1280.0 466.9 1275.4 466.9 1270.8 466.9 1266.2 466.9 1261.6 466.9 1257.0 466.9 1252.4 466.9 1247.8 466.9 1243.2 466.9 1238.5 466.9 1233.9 466.9 1229.3 466.9 1224.7 466.9 1220.1 466.9 1215.5 466.9 1210.9 466.9 1206.3 466.9 1201.7 466.9 1197.1 466.9 1192.5 466.9 1187.9 466.9 1183.3 466.9 1178.7 466.9 1174.1 466.9 1169.5 466.9 1164.8 466.9 1160.2 466.9 1155.6 466.9 1151.0 466.9 1146.4 466.9 1141.8 466.9 1137.2 466.9 1132.6 466.9 1128.0 466.9 1123.4 466.9 1118.8 466.9 1114.2 466.9 1109.6 466.9 1105.0 466.9 1100.4 466.9 1095.8 466.9 1091.1 466.9 1086.5 466.9 1081.9 466.9 1077.3 466.9 1072.7 466.9 1068.1 466.9 1063.5 466.9 1058.9 466.9 1054.3 466.9 1049.7 466.9 1045.1 466.9 1040.5 466.9 1035.9 466.9 1031.3 466.9 1026.7 466.9 1022.1 466.9 1017.5 466.9 1012.8 466.9 1008.2 466.9 1003.6 466.9 999.0 466.9 994.4 466.9 989.8 466.9 985.2 466.9 980.6 466.9 976.0 466.9 971.4 466.9 966.8 466.9 962.2 466.9 957.6 466.9 953.0 466.9 948.4 466.9 943.8 466.9 939.1 466.9 934.5 466.9 929.9 466.9 925.3 466.9 920.7 466.9 916.1 466.9 911.5 466.9 906.9 466.9 902.3 466.9 897.7 466.9 893.1 466.9 888.5 466.9 883.9 466.9 879.3 466.9 874.7 466.9 870.1 466.9 865.5 466.9 860.8 466.9 856.2 466.9 851.6 466.9 847.0 466.9 842.4 466.9 837.8 466.9 833.2 466.9 828.6 466.9 824.0 466.9 819.4 466.9 814.8 466.9 810.2 466.9 805.6 466.9 801.0 466.9 796.4 466.9 791.8 466.9 787.1 466.9 782.5 466.9 777.9 466.9 773.3 466.9 768.7 466.9 764.1 466.9 759.5 466.9 754.9 466.9 750.3 466.9 745.7 466.9 741.1 466.9 736.5 466.9 731.9 466.9 727.3 466.9 722.7 466.9 718.1 466.9 713.5 466.9 708.8 466.9 704.2 466.9 699.6 466.9 695.0 466.9 690.4 466.9 685.8 466.9 681.2 466.9 676.6 466.9 672.0 466.9 667.4 466.9 662.8 466.9 658.2 466.9 653.6 466.9 649.0 466.9 644.4 466.9 639.8 466.9 635.1 466.9 630.5 466.9 625.9 466.9 621.3 466.9 616.7 466.9 612.1 466.9 607.5 466.9 602.9 466.9 598.3 466.9 593.7 466.9 589.1 466.9 584.5 466.9 579.9 466.9 575.3 466.9 570.7 466.9 566.1 466.9 561.4 466.9 556.8 466.9 552.2 466.9 547.6 466.9 543.0 466.9 538.4 466.9 533.8 466.9 529.2 466.9 524.6 466.9 520.0 466.9 515.4 466.9 510.8 466.9 506.2 466.9 501.6 466.9 497.0 466.9 492.4 466.9 487.8 466.9"/><path d="M1410.0 418.0 1404.4 418.0 1398.7 418.0 1393.1 418.0 1387.5 418.0 1381.8 418.0 1376.2 418.0 1370.5 418.0 1364.9 418.0 1359.2 418.0 1353.6 418.0 1348.0 418.0 1342.3 418.0 1336.7 418.0 1331.0 418.0 1325.4 418.0 1319.8 418.0 1314.1 418.0 1308.5 418.0 1302.8 418.0 1297.2 418.0 1291.5 418.0 1285.9 418.0 1280.3 418.0 1274.6 418.0 1269.0 418.0 1263.3 418.0 1257.7 418.0 1252.1 418.0 1246.4 418.0 1240.8 418.0 1235.1 418.0 1229.5 418.0 1223.9 418.0 1218.2 418.0 1212.6 418.0 1206.9 418.0 1201.3 418.0 1195.6 418.0 1190.0 418.0 1184.4 418.0 1178.7 418.0 1173.1 418.0 1167.4 418.0 1161.8 418.0 1156.2 418.0 1150.5 418.0 1144.9 418.0 1139.2 418.0 1133.6 418.0 1128.0 418.0 1122.3 418.0 1116.7 418.0 1111.0 418.0 1105.4 418.0 1099.7 418.0 1094.1 418.0 1088.5 418.0 1082.8 418.0 1077.2 418.0 1071.5 418.0 1065.9 418.0 1060.3 418.0 1054.6 418.0 1049.0 418.0 1043.3 418.0 1037.7 418.0 1032.0 418.0 1026.4 418.0 1020.8 418.0 1015.1 418.0 1009.5 418.0 1003.8 418.0 998.2 418.0 992.6 418.0 986.9 418.0 981.3 418.0 975.6 418.0 970.0 418.0 964.4 418.0 958.7 418.0 953.1 418.0 947.4 418.0 941.8 418.0 936.1 418.0 930.5 418.0 924.9 418.0 919.2 418.0 913.6 418.0 907.9 418.0 902.3 418.0 896.7 418.0 891.0 418.0 885.4 418.0 879.7 418.0 874.1 418.0 868.5 418.0 862.8 418.0 857.2 418.0 851.5 418.0 845.9 418.0 840.2 418.0 834.6 418.0 829.0 418.0 823.3 418.0 817.7 418.0 812.0 418.0 806.4 418.0 800.8 418.0 795.1 418.0 789.5 418.0 783.8 418.0 778.2 418.0 772.6 418.0 766.9 418.0 761.3 418.0 755.6 418.0 750.0 418.0 744.3 418.0 738.7 418.0 733.1 418.0 727.4 418.0 721.8 418.0 716.1 418.0 710.5 418.0 704.9 418.0 699.2 418.0 693.6 418.0 687.9 418.0 682.3 418.0 676.6 418.0 671.0 418.0 665.4 418.0 659.7 418.0 654.1 418.0 648.4 418.0 642.8 418.0 637.2 418.0 631.5 418.0 625.9 418.0 620.2 418.0 614.6 418.0 609.0 418.0 603.3 418.0 597.7 418.0 592.0 418.0 586.4 418.0 580.7 418.0 575.1 418.0 569.5 418.0 563.8 418.0 558.2 418.0 552.5 418.0 546.9 418.0 541.3 418.0 535.6 418.0 530.0 418.0 524.3 418.0 518.7 418.0 513.1 418.0 507.4 418.0 501.8 418.0 496.1 418.0 490.5 418.0 484.8 418.0 479.2 418.0 473.6 418.0 467.9 418.0 462.3 418.0 456.6 418.0 451.0 418.0 445.4 418.0 439.7 418.0 434.1 418.0 428.4 418.0 422.8 418.0 417.1 418.0 411.5 418.0 405.9 418.0 400.2 418.0 394.6 418.0"/><path d="M1468.6 369.2 1462.3 369.2 1456.0 369.2 1449.7 369.2 1443.4 369.2 1437.1 369.2 1430.8 369.2 1424.5 369.2 1418.2 369.2 1412.0 369.2 1405.7 369.2 1399.4 369.2 1393.1 369.2 1386.8 369.2 1380.5 369.2 1374.2 369.2 1367.9 369.2 1361.6 369.2 1355.3 369.2 1349.0 369.2 1342.7 369.2 1336.5 369.2 1330.2 369.2 1323.9 369.2 1317.6 369.2 1311.3 369.2 1305.0 369.2 1298.7 369.2 1292.4 369.2 1286.1 369.2 1279.8 369.2 1273.5 369.2 1267.2 369.2 1260.9 369.2 1254.7 369.2 1248.4 369.2 1242.1 369.2 1235.8 369.2 1229.5 369.2 1223.2 369.2 1216.9 369.2 1210.6 369.2 1204.3 369.2 1198.0 369.2 1191.7 369.2 1185.4 369.2 1179.1 369.2 1172.9 369.2 1166.6 369.2 1160.3 369.2 1154.0 369.2 1147.7 369.2 1141.4 369.2 1135.1 369.2 1128.8 369.2 1122.5 369.2 1116.2 369.2 1109.9 369.2 1103.6 369.2 1097.4 369.2 1091.1 369.2 1084.8 369.2 1078.5 369.2 1072.2 369.2 1065.9 369.2 1059.6 369.2 1053.3 369.2 1047.0 369.2 1040.7 369.2 1034.4 369.2 1028.1 369.2 1021.8 369.2 1015.6 369.2 1009.3 369.2 1003.0 369.2 996.7 369.2 990.4 369.2 984.1 369.2 977.8 369.2 971.5 369.2 965.2 369.2 958.9 369.2 952.6 369.2 946.3 369.2 940.1 369.2 933.8 369.2 927.5 369.2 921.2 369.2 914.9 369.2 908.6 369.2 902.3 369.2 896.0 369.2 889.7 369.2 883.4 369.2 877.1 369.2 870.8 369.2 864.5 369.2 858.3 369.2 852.0 369.2 845.7 369.2 839.4 369.2 833.1 369.2 826.8 369.2 820.5 369.2 814.2 369.2 807.9 369.2 801.6 369.2 795.3 369.2 789.0 369.2 782.8 369.2 776.5 369.2 770.2 369.2 763.9 369.2 757.6 369.2 751.3 369.2 745.0 369.2 738.7 369.2 732.4 369.2 726.1 369.2 719.8 369.2 713.5 369.2 707.2 369.2 701.0 369.2 694.7 369.2 688.4 369.2 682.1 369.2 675.8 369.2 669.5 369.2 663.2 369.2 656.9 369.2 650.6 369.2 644.3 369.2 638.0 369.2 631.7 369.2 625.5 369.2 619.2 369.2 612.9 369.2 606.6 369.2 600.3 369.2 594.0 369.2 587.7 369.2 581.4 369.2 575.1 369.2 568.8 369.2 562.5 369.2 556.2 369.2 549.9 369.2 543.7 369.2 537.4 369.2 531.1 369.2 524.8 369.2 518.5 369.2 512.2 369.2 505.9 369.2 499.6 369.2 493.3 369.2 487.0 369.2 480.7 369.2 474.4 369.2 468.1 369.2 461.9 369.2 455.6 369.2 449.3 369.2 443.0 369.2 436.7 369.2 430.4 369.2 424.1 369.2 417.8 369.2 411.5 369.2 405.2 369.2 398.9 369.2 392.6 369.2 386.4 369.2 380.1 369.2 373.8 369.2 367.5 369.2 361.2 369.2 354.9 369.2 348.6 369.2 342.3 369.2 336.0 369.2"/><path d="M1488.6 320.3 1482.0 320.3 1475.5 320.3 1469.0 320.3 1462.5 320.3 1456.0 320.3 1449.5 320.3 1443.0 320.3 1436.4 320.3 1429.9 320.3 1423.4 320.3 1416.9 320.3 1410.4 320.3 1403.9 320.3 1397.4 320.3 1390.8 320.3 1384.3 320.3 1377.8 320.3 1371.3 320.3 1364.8 320.3 1358.3 320.3 1351.8 320.3 1345.3 320.3 1338.7 320.3 1332.2 320.3 1325.7 320.3 1319.2 320.3 1312.7 320.3 1306.2 320.3 1299.7 320.3 1293.1 320.3 1286.6 320.3 1280.1 320.3 1273.6 320.3 1267.1 320.3 1260.6 320.3 1254.1 320.3 1247.5 320.3 1241.0 320.3 1234.5 320.3 1228.0 320.3 1221.5 320.3 1215.0 320.3 1208.5 320.3 1201.9 320.3 1195.4 320.3 1188.9 320.3 1182.4 320.3 1175.9 320.3 1169.4 320.3 1162.9 320.3 1156.3 320.3 1149.8 320.3 1143.3 320.3 1136.8 320.3 1130.3 320.3 1123.8 320.3 1117.3 320.3 1110.7 320.3 1104.2 320.3 1097.7 320.3 1091.2 320.3 1084.7 320.3 1078.2 320.3 1071.7 320.3 1065.1 320.3 1058.6 320.3 1052.1 320.3 1045.6 320.3 1039.1 320.3 1032.6 320.3 1026.1 320.3 1019.6 320.3 1013.0 320.3 1006.5 320.3 1000.0 320.3 993.5 320.3 987.0 320.3 980.5 320.3 974.0 320.3 967.4 320.3 960.9 320.3 954.4 320.3 947.9 320.3 941.4 320.3 934.9 320.3 928.4 320.3 921.8 320.3 915.3 320.3 908.8 320.3 902.3 320.3 895.8 320.3 889.3 320.3 882.8 320.3 876.2 320.3 869.7 320.3 863.2 320.3 856.7 320.3 850.2 320.3 843.7 320.3 837.2 320.3 830.6 320.3 824.1 320.3 817.6 320.3 811.1 320.3 804.6 320.3 798.1 320.3 791.6 320.3 785.0 320.3 778.5 320.3 772.0 320.3 765.5 320.3 759.0 320.3 752.5 320.3 746.0 320.3 739.4 320.3 732.9 320.3 726.4 320.3 719.9 320.3 713.4 320.3 706.9 320.3 700.4 320.3 693.9 320.3 687.3 320.3 680.8 320.3 674.3 320.3 667.8 320.3 661.3 320.3 654.8 320.3 648.3 320.3 641.7 320.3 635.2 320.3 628.7 320.3 622.2 320.3 615.7 320.3 609.2 320.3 602.7 320.3 596.1 320.3 589.6 320.3 583.1 320.3 576.6 320.3 570.1 320.3 563.6 320.3 557.1 320.3 550.5 320.3 544.0 320.3 537.5 320.3 531.0 320.3 524.5 320.3 518.0 320.3 511.5 320.3 504.9 320.3 498.4 320.3 491.9 320.3 485.4 320.3 478.9 320.3 472.4 320.3 465.9 320.3 459.3 320.3 452.8 320.3 446.3 320.3 439.8 320.3 433.3 320.3 426.8 320.3 420.3 320.3 413.7 320.3 407.2 320.3 400.7 320.3 394.2 320.3 387.7 320.3 381.2 320.3 374.7 320.3 368.2 320.3 361.6 320.3 355.1 320.3 348.6 320.3 342.1 320.3 335.6 320.3 329.1 320.3 322.6 320.3 316.0 320.3"/><path d="M1468.6 271.4 1462.3 271.4 1456.0 271.4 1449.7 271.4 1443.4 271.4 1437.1 271.4 1430.8 271.4 1424.5 271.4 1418.2 271.4 1412.0 271.4 1405.7 271.4 1399.4 271.4 1393.1 271.4 1386.8 271.4 1380.5 271.4 1374.2 271.4 1367.9 271.4 1361.6 271.4 1355.3 271.4 1349.0 271.4 1342.7 271.4 1336.5 271.4 1330.2 271.4 1323.9 271.4 1317.6 271.4 1311.3 271.4 1305.0 271.4 1298.7 271.4 1292.4 271.4 1286.1 271.4 1279.8 271.4 1273.5 271.4 1267.2 271.4 1260.9 271.4 1254.7 271.4 1248.4 271.4 1242.1 271.4 1235.8 271.4 1229.5 271.4 1223.2 271.4 1216.9 271.4 1210.6 271.4 1204.3 271.4 1198.0 271.4 1191.7 271.4 1185.4 271.4 1179.1 271.4 1172.9 271.4 1166.6 271.4 1160.3 271.4 1154.0 271.4 1147.7 271.4 1141.4 271.4 1135.1 271.4 1128.8 271.4 1122.5 271.4 1116.2 271.4 1109.9 271.4 1103.6 271.4 1097.4 271.4 1091.1 271.4 1084.8 271.4 1078.5 271.4 1072.2 271.4 1065.9 271.4 1059.6 271.4 1053.3 271.4 1047.0 271.4 1040.7 271.4 1034.4 271.4 1028.1 271.4 1021.8 271.4 1015.6 271.4 1009.3 271.4 1003.0 271.4 996.7 271.4 990.4 271.4 984.1 271.4 977.8 271.4 971.5 271.4 965.2 271.4 958.9 271.4 952.6 271.4 946.3 271.4 940.1 271.4 933.8 271.4 927.5 271.4 921.2 271.4 914.9 271.4 908.6 271.4 902.3 271.4 896.0 271.4 889.7 271.4 883.4 271.4 877.1 271.4 870.8 271.4 864.5 271.4 858.3 271.4 852.0 271.4 845.7 271.4 839.4 271.4 833.1 271.4 826.8 271.4 820.5 271.4 814.2 271.4 807.9 271.4 801.6 271.4 795.3 271.4 789.0 271.4 782.8 271.4 776.5 271.4 770.2 271.4 763.9 271.4 757.6 271.4 751.3 271.4 745.0 271.4 738.7 271.4 732.4 271.4 726.1 271.4 719.8 271.4 713.5 271.4 707.2 271.4 701.0 271.4 694.7 271.4 688.4 271.4 682.1 271.4 675.8 271.4 669.5 271.4 663.2 271.4 656.9 271.4 650.6 271.4 644.3 271.4 638.0 271.4 631.7 271.4 625.5 271.4 619.2 271.4 612.9 271.4 606.6 271.4 600.3 271.4 594.0 271.4 587.7 271.4 581.4 271.4 575.1 271.4 568.8 271.4 562.5 271.4 556.2 271.4 549.9 271.4 543.7 271.4 537.4 271.4 531.1 271.4 524.8 271.4 518.5 271.4 512.2 271.4 505.9 271.4 499.6 271.4 493.3 271.4 487.0 271.4 480.7 271.4 474.4 271.4 468.1 271.4 461.9 271.4 455.6 271.4 449.3 271.4 443.0 271.4 436.7 271.4 430.4 271.4 424.1 271.4 417.8 271.4 411.5 271.4 405.2 271.4 398.9 271.4 392.6 271.4 386.4 271.4 380.1 271.4 373.8 271.4 367.5 271.4 361.2 271.4 354.9 271.4 348.6 271.4 342.3 271.4 336.0 271.4"/><path d="M1410.0 222.6 1404.4 222.6 1398.7 222.6 1393.1 222.6 1387.5 222.6 1381.8 222.6 1376.2 222.6 1370.5 222.6 1364.9 222.6 1359.2 222.6 1353.6 222.6 1348.0 222.6 1342.3 222.6 1336.7 222.6 1331.0 222.6 1325.4 222.6 1319.8 222.6 1314.1 222.6 1308.5 222.6 1302.8 222.6 1297.2 222.6 1291.5 222.6 1285.9 222.6 1280.3 222.6 1274.6 222.6 1269.0 222.6 1263.3 222.6 1257.7 222.6 1252.1 222.6 1246.4 222.6 1240.8 222.6 1235.1 222.6 1229.5 222.6 1223.9 222.6 1218.2 222.6 1212.6 222.6 1206.9 222.6 1201.3 222.6 1195.6 222.6 1190.0 222.6 1184.4 222.6 1178.7 222.6 1173.1 222.6 1167.4 222.6 1161.8 222.6 1156.2 222.6 1150.5 222.6 1144.9 222.6 1139.2 222.6 1133.6 222.6 1128.0 222.6 1122.3 222.6 1116.7 222.6 1111.0 222.6 1105.4 222.6 1099.7 222.6 1094.1 222.6 1088.5 222.6 1082.8 222.6 1077.2 222.6 1071.5 222.6 1065.9 222.6 1060.3 222.6 1054.6 222.6 1049.0 222.6 1043.3 222.6 1037.7 222.6 1032.0 222.6 1026.4 222.6 1020.8 222.6 1015.1 222.6 1009.5 222.6 1003.8 222.6 998.2 222.6 992.6 222.6 986.9 222.6 981.3 222.6 975.6 222.6 970.0 222.6 964.4 222.6 958.7 222.6 953.1 222.6 947.4 222.6 941.8 222.6 936.1 222.6 930.5 222.6 924.9 222.6 919.2 222.6 913.6 222.6 907.9 222.6 902.3 222.6 896.7 222.6 891.0 222.6 885.4 222.6 879.7 222.6 874.1 222.6 868.5 222.6 862.8 222.6 857.2 222.6 851.5 222.6 845.9 222.6 840.2 222.6 834.6 222.6 829.0 222.6 823.3 222.6 817.7 222.6 812.0 222.6 806.4 222.6 800.8 222.6 795.1 222.6 789.5 222.6 783.8 222.6 778.2 222.6 772.6 222.6 766.9 222.6 761.3 222.6 755.6 222.6 750.0 222.6 744.3 222.6 738.7 222.6 733.1 222.6 727.4 222.6 721.8 222.6 716.1 222.6 710.5 222.6 704.9 222.6 699.2 222.6 693.6 222.6 687.9 222.6 682.3 222.6 676.6 222.6 671.0 222.6 665.4 222.6 659.7 222.6 654.1 222.6 648.4 222.6 642.8 222.6 637.2 222.6 631.5 222.6 625.9 222.6 620.2 222.6 614.6 222.6 609.0 222.6 603.3 222.6 597.7 222.6 592.0 222.6 586.4 222.6 580.7 222.6 575.1 222.6 569.5 222.6 563.8 222.6 558.2 222.6 552.5 222.6 546.9 222.6 541.3 222.6 535.6 222.6 530.0 222.6 524.3 222.6 518.7 222.6 513.1 222.6 507.4 222.6 501.8 222.6 496.1 222.6 490.5 222.6 484.8 222.6 479.2 222.6 473.6 222.6 467.9 222.6 462.3 222.6 456.6 222.6 451.0 222.6 445.4 222.6 439.7 222.6 434.1 222.6 428.4 222.6 422.8 222.6 417.1 222.6 411.5 222.6 405.9 222.6 400.2 222.6 394.6 222.6"/><path d="M1316.8 173.7 1312.2 173.7 1307.6 173.7 1303.0 173.7 1298.4 173.7 1293.8 173.7 1289.2 173.7 1284.6 173.7 1280.0 173.7 1275.4 173.7 1270.8 173.7 1266.2 173.7 1261.6 173.7 1257.0 173.7 1252.4 173.7 1247.8 173.7 1243.2 173.7 1238.5 173.7 1233.9 173.7 1229.3 173.7 1224.7 173.7 1220.1 173.7 1215.5 173.7 1210.9 173.7 1206.3 173.7 1201.7 173.7 1197.1 173.7 1192.5 173.7 1187.9 173.7 1183.3 173.7 1178.7 173.7 1174.1 173.7 1169.5 173.7 1164.8 173.7 1160.2 173.7 1155.6 173.7 1151.0 173.7 1146.4 173.7 1141.8 173.7 1137.2 173.7 1132.6 173.7 1128.0 173.7 1123.4 173.7 1118.8 173.7 1114.2 173.7 1109.6 173.7 1105.0 173.7 1100.4 173.7 1095.8 173.7 1091.1 173.7 1086.5 173.7 1081.9 173.7 1077.3 173.7 1072.7 173.7 1068.1 173.7 1063.5 173.7 1058.9 173.7 1054.3 173.7 1049.7 173.7 1045.1 173.7 1040.5 173.7 1035.9 173.7 1031.3 173.7 1026.7 173.7 1022.1 173.7 1017.5 173.7 1012.8 173.7 1008.2 173.7 1003.6 173.7 999.0 173.7 994.4 173.7 989.8 173.7 985.2 173.7 980.6 173.7 976.0 173.7 971.4 173.7 966.8 173.7 962.2 173.7 957.6 173.7 953.0 173.7 948.4 173.7 943.8 173.7 939.1 173.7 934.5 173.7 929.9 173.7 925.3 173.7 920.7 173.7 916.1 173.7 911.5 173.7 906.9 173.7 902.3 173.7 897.7 173.7 893.1 173.7 888.5 173.7 883.9 173.7 879.3 173.7 874.7 173.7 870.1 173.7 865.5 173.7 860.8 173.7 856.2 173.7 851.6 173.7 847.0 173.7 842.4 173.7 837.8 173.7 833.2 173.7 828.6 173.7 824.0 173.7 819.4 173.7 814.8 173.7 810.2 173.7 805.6 173.7 801.0 173.7 796.4 173.7 791.8 173.7 787.1 173.7 782.5 173.7 777.9 173.7 773.3 173.7 768.7 173.7 764.1 173.7 759.5 173.7 754.9 173.7 750.3 173.7 745.7 173.7 741.1 173.7 736.5 173.7 731.9 173.7 727.3 173.7 722.7 173.7 718.1 173.7 713.5 173.7 708.8 173.7 704.2 173.7 699.6 173.7 695.0 173.7 690.4 173.7 685.8 173.7 681.2 173.7 676.6 173.7 672.0 173.7 667.4 173.7 662.8 173.7 658.2 173.7 653.6 173.7 649.0 173.7 644.4 173.7 639.8 173.7 635.1 173.7 630.5 173.7 625.9 173.7 621.3 173.7 616.7 173.7 612.1 173.7 607.5 173.7 602.9 173.7 598.3 173.7 593.7 173.7 589.1 173.7 584.5 173.7 579.9 173.7 575.3 173.7 570.7 173.7 566.1 173.7 561.4 173.7 556.8 173.7 552.2 173.7 547.6 173.7 543.0 173.7 538.4 173.7 533.8 173.7 529.2 173.7 524.6 173.7 520.0 173.7 515.4 173.7 510.8 173.7 506.2 173.7 501.6 173.7 497.0 173.7 492.4 173.7 487.8 173.7"/><path d="M1195.4 124.9 1192.2 124.9 1188.9 124.9 1185.7 124.9 1182.4 124.9 1179.1 124.9 1175.9 124.9 1172.6 124.9 1169.4 124.9 1166.1 124.9 1162.9 124.9 1159.6 124.9 1156.3 124.9 1153.1 124.9 1149.8 124.9 1146.6 124.9 1143.3 124.9 1140.1 124.9 1136.8 124.9 1133.5 124.9 1130.3 124.9 1127.0 124.9 1123.8 124.9 1120.5 124.9 1117.3 124.9 1114.0 124.9 1110.7 124.9 1107.5 124.9 1104.2 124.9 1101.0 124.9 1097.7 124.9 1094.5 124.9 1091.2 124.9 1087.9 124.9 1084.7 124.9 1081.4 124.9 1078.2 124.9 1074.9 124.9 1071.7 124.9 1068.4 124.9 1065.2 124.9 1061.9 124.9 1058.6 124.9 1055.4 124.9 1052.1 124.9 1048.9 124.9 1045.6 124.9 1042.4 124.9 1039.1 124.9 1035.8 124.9 1032.6 124.9 1029.3 124.9 1026.1 124.9 1022.8 124.9 1019.6 124.9 1016.3 124.9 1013.0 124.9 1009.8 124.9 1006.5 124.9 1003.3 124.9 1000.0 124.9 996.8 124.9 993.5 124.9 990.2 124.9 987.0 124.9 983.7 124.9 980.5 124.9 977.2 124.9 974.0 124.9 970.7 124.9 967.4 124.9 964.2 124.9 960.9 124.9 957.7 124.9 954.4 124.9 951.2 124.9 947.9 124.9 944.6 124.9 941.4 124.9 938.1 124.9 934.9 124.9 931.6 124.9 928.4 124.9 925.1 124.9 921.8 124.9 918.6 124.9 915.3 124.9 912.1 124.9 908.8 124.9 905.6 124.9 902.3 124.9 899.0 124.9 895.8 124.9 892.5 124.9 889.3 124.9 886.0 124.9 882.8 124.9 879.5 124.9 876.2 124.9 873.0 124.9 869.7 124.9 866.5 124.9 863.2 124.9 860.0 124.9 856.7 124.9 853.4 124.9 850.2 124.9 846.9 124.9 843.7 124.9 840.4 124.9 837.2 124.9 833.9 124.9 830.6 124.9 827.4 124.9 824.1 124.9 820.9 124.9 817.6 124.9 814.4 124.9 811.1 124.9 807.8 124.9 804.6 124.9 801.3 124.9 798.1 124.9 794.8 124.9 791.6 124.9 788.3 124.9 785.0 124.9 781.8 124.9 778.5 124.9 775.3 124.9 772.0 124.9 768.8 124.9 765.5 124.9 762.2 124.9 759.0 124.9 755.7 124.9 752.5 124.9 749.2 124.9 746.0 124.9 742.7 124.9 739.4 124.9 736.2 124.9 732.9 124.9 729.7 124.9 726.4 124.9 723.2 124.9 719.9 124.9 716.7 124.9 713.4 124.9 710.1 124.9 706.9 124.9 703.6 124.9 700.4 124.9 697.1 124.9 693.9 124.9 690.6 124.9 687.3 124.9 684.1 124.9 680.8 124.9 677.6 124.9 674.3 124.9 671.1 124.9 667.8 124.9 664.5 124.9 661.3 124.9 658.0 124.9 654.8 124.9 651.5 124.9 648.3 124.9 645.0 124.9 641.7 124.9 638.5 124.9 635.2 124.9 632.0 124.9 628.7 124.9 625.5 124.9 622.2 124.9 618.9 124.9 615.7 124.9 612.4 124.9 609.2 124.9"/><path d="M1054.0 76.0 1052.3 76.0 1050.7 76.0 1049.0 76.0 1047.3 76.0 1045.6 76.0 1043.9 76.0 1042.2 76.0 1040.5 76.0 1038.9 76.0 1037.2 76.0 1035.5 76.0 1033.8 76.0 1032.1 76.0 1030.4 76.0 1028.7 76.0 1027.1 76.0 1025.4 76.0 1023.7 76.0 1022.0 76.0 1020.3 76.0 1018.6 76.0 1016.9 76.0 1015.3 76.0 1013.6 76.0 1011.9 76.0 1010.2 76.0 1008.5 76.0 1006.8 76.0 1005.1 76.0 1003.5 76.0 1001.8 76.0 1000.1 76.0 998.4 76.0 996.7 76.0 995.0 76.0 993.3 76.0 991.7 76.0 990.0 76.0 988.3 76.0 986.6 76.0 984.9 76.0 983.2 76.0 981.5 76.0 979.9 76.0 978.2 76.0 976.5 76.0 974.8 76.0 973.1 76.0 971.4 76.0 969.7 76.0 968.1 76.0 966.4 76.0 964.7 76.0 963.0 76.0 961.3 76.0 959.6 76.0 957.9 76.0 956.3 76.0 954.6 76.0 952.9 76.0 951.2 76.0 949.5 76.0 947.8 76.0 946.1 76.0 944.4 76.0 942.8 76.0 941.1 76.0 939.4 76.0 937.7 76.0 936.0 76.0 934.3 76.0 932.6 76.0 931.0 76.0 929.3 76.0 927.6 76.0 925.9 76.0 924.2 76.0 922.5 76.0 920.8 76.0 919.2 76.0 917.5 76.0 915.8 76.0 914.1 76.0 912.4 76.0 910.7 76.0 909.0 76.0 907.4 76.0 905.7 76.0 904.0 76.0 902.3 76.0 900.6 76.0 898.9 76.0 897.2 76.0 895.6 76.0 893.9 76.0 892.2 76.0 890.5 76.0 888.8 76.0 887.1 76.0 885.4 76.0 883.8 76.0 882.1 76.0 880.4 76.0 878.7 76.0 877.0 76.0 875.3 76.0 873.6 76.0 872.0 76.0 870.3 76.0 868.6 76.0 866.9 76.0 865.2 76.0 863.5 76.0 861.8 76.0 860.2 76.0 858.5 76.0 856.8 76.0 855.1 76.0 853.4 76.0 851.7 76.0 850.0 76.0 848.3 76.0 846.7 76.0 845.0 76.0 843.3 76.0 841.6 76.0 839.9 76.0 838.2 76.0 836.5 76.0 834.9 76.0 833.2 76.0 831.5 76.0 829.8 76.0 828.1 76.0 826.4 76.0 824.7 76.0 823.1 76.0 821.4 76.0 819.7 76.0 818.0 76.0 816.3 76.0 814.6 76.0 812.9 76.0 811.3 76.0 809.6 76.0 807.9 76.0 806.2 76.0 804.5 76.0 802.8 76.0 801.1 76.0 799.5 76.0 797.8 76.0 796.1 76.0 794.4 76.0 792.7 76.0 791.0 76.0 789.3 76.0 787.7 76.0 786.0 76.0 784.3 76.0 782.6 76.0 780.9 76.0 779.2 76.0 777.5 76.0 775.9 76.0 774.2 76.0 772.5 76.0 770.8 76.0 769.1 76.0 767.4 76.0 765.7 76.0 764.1 76.0 762.4 76.0 760.7 76.0 759.0 76.0 757.3 76.0 755.6 76.0 753.9 76.0 752.3 76.0 750.6 76.0"/></g>
<text x="893.61" y="329.80" text-anchor="start" font-size="10.21" fill="#8a8a8a" textLength="14.33" lengthAdjust="spacingAndGlyphs">+0</text><circle cx="911.26" cy="322.70" r="1.05" fill="none" stroke="#8a8a8a" stroke-width="0.7"/>
<text x="792.80" y="329.80" text-anchor="start" font-size="10.21" fill="#8a8a8a" textLength="20.51" lengthAdjust="spacingAndGlyphs">+30</text><circle cx="816.65" cy="322.70" r="1.05" fill="none" stroke="#8a8a8a" stroke-width="0.7"/>
<text x="695.09" y="329.80" text-anchor="start" font-size="10.21" fill="#8a8a8a" textLength="20.51" lengthAdjust="spacingAndGlyphs">+60</text><circle cx="718.94" cy="322.70" r="1.05" fill="none" stroke="#8a8a8a" stroke-width="0.7"/>
<text x="597.38" y="329.80" text-anchor="start" font-size="10.21" fill="#8a8a8a" textLength="20.51" lengthAdjust="spacingAndGlyphs">+90</text><circle cx="621.23" cy="322.70" r="1.05" fill="none" stroke="#8a8a8a" stroke-width="0.7"/>
<text x="496.58" y="329.80" text-anchor="start" font-size="10.21" fill="#8a8a8a" textLength="26.70" lengthAdjust="spacingAndGlyphs">+120</text><circle cx="526.61" cy="322.70" r="1.05" fill="none" stroke="#8a8a8a" stroke-width="0.7"/>
<text x="398.87" y="329.80" text-anchor="start" font-size="10.21" fill="#8a8a8a" textLength="26.70" lengthAdjust="spacingAndGlyphs">+150</text><circle cx="428.90" cy="322.70" r="1.05" fill="none" stroke="#8a8a8a" stroke-width="0.7"/>
<text x="301.16" y="329.80" text-anchor="start" font-size="10.21" fill="#8a8a8a" textLength="26.70" lengthAdjust="spacingAndGlyphs">+180</text><circle cx="331.19" cy="322.70" r="1.05" fill="none" stroke="#8a8a8a" stroke-width="0.7"/>
<text x="1375.97" y="329.80" text-anchor="start" font-size="10.21" fill="#8a8a8a" textLength="26.70" lengthAdjust="spacingAndGlyphs">+210</text><circle cx="1406.00" cy="322.70" r="1.05" fill="none" stroke="#8a8a8a" stroke-width="0.7"/>
<text x="1278.26" y="329.80" text-anchor="start" font-size="10.21" fill="#8a8a8a" textLength="26.70" lengthAdjust="spacingAndGlyphs">+240</text><circle cx="1308.29" cy="322.70" r="1.05" fill="none" stroke="#8a8a8a" stroke-width="0.7"/>
<text x="1180.55" y="329.80" text-anchor="start" font-size="10.21" fill="#8a8a8a" textLength="26.70" lengthAdjust="spacingAndGlyphs">+270</text><circle cx="1210.58" cy="322.70" r="1.05" fill="none" stroke="#8a8a8a" stroke-width="0.7"/>
<text x="1082.84" y="329.80" text-anchor="start" font-size="10.21" fill="#8a8a8a" textLength="26.70" lengthAdjust="spacingAndGlyphs">+300</text><circle cx="1112.87" cy="322.70" r="1.05" fill="none" stroke="#8a8a8a" stroke-width="0.7"/>
<text x="985.13" y="329.80" text-anchor="start" font-size="10.21" fill="#8a8a8a" textLength="26.70" lengthAdjust="spacingAndGlyphs">+330</text><circle cx="1015.16" cy="322.70" r="1.05" fill="none" stroke="#8a8a8a" stroke-width="0.7"/>
<text x="1473.68" y="329.80" text-anchor="start" font-size="10.21" fill="#8a8a8a" textLength="26.70" lengthAdjust="spacingAndGlyphs">+180</text><circle cx="1503.71" cy="322.70" r="1.05" fill="none" stroke="#8a8a8a" stroke-width="0.7"/>
<text x="890.51" y="25.37" text-anchor="start" font-size="10.21" fill="#8a8a8a" textLength="20.51" lengthAdjust="spacingAndGlyphs">+90</text><circle cx="914.36" cy="18.27" r="1.05" fill="none" stroke="#8a8a8a" stroke-width="0.7"/>
<text x="890.51" y="123.08" text-anchor="start" font-size="10.21" fill="#8a8a8a" textLength="20.51" lengthAdjust="spacingAndGlyphs">+60</text><circle cx="914.36" cy="115.98" r="1.05" fill="none" stroke="#8a8a8a" stroke-width="0.7"/>
<text x="890.51" y="220.79" text-anchor="start" font-size="10.21" fill="#8a8a8a" textLength="20.51" lengthAdjust="spacingAndGlyphs">+30</text><circle cx="914.36" cy="213.69" r="1.05" fill="none" stroke="#8a8a8a" stroke-width="0.7"/>
<text x="890.51" y="428.61" text-anchor="start" font-size="10.21" fill="#8a8a8a" textLength="20.51" lengthAdjust="spacingAndGlyphs">−30</text><circle cx="914.36" cy="421.51" r="1.05" fill="none" stroke="#8a8a8a" stroke-width="0.7"/>
<text x="890.51" y="526.32" text-anchor="start" font-size="10.21" fill="#8a8a8a" textLength="20.51" lengthAdjust="spacingAndGlyphs">−60</text><circle cx="914.36" cy="519.22" r="1.05" fill="none" stroke="#8a8a8a" stroke-width="0.7"/>
<text x="890.51" y="624.03" text-anchor="start" font-size="10.21" fill="#8a8a8a" textLength="20.51" lengthAdjust="spacingAndGlyphs">−90</text><circle cx="914.36" cy="616.93" r="1.05" fill="none" stroke="#8a8a8a" stroke-width="0.7"/>
<path d="M617.6 265.0 619.9 263.6 622.3 262.2 624.6 260.7 627.0 259.3 629.4 257.9 631.7 256.5 634.2 255.1 636.6 253.8 639.0 252.4 641.4 251.0 643.9 249.6 646.4 248.3 648.8 246.9 651.3 245.6 653.8 244.2 656.3 242.9 658.8 241.6 661.3 240.2 663.8 238.9 666.4 237.6 668.9 236.3 671.4 235.0 674.0 233.8 676.6 232.5 679.1 231.2 681.7 230.0 684.2 228.7 686.8 227.5 689.4 226.2 692.0 225.0 694.6 223.8 697.1 222.6 699.7 221.4 702.3 220.3 704.9 219.1 707.5 217.9 710.1 216.8 712.7 215.7 715.3 214.5 717.9 213.4 720.4 212.3 723.0 211.2 725.6 210.2 728.2 209.1 730.8 208.1 733.3 207.0 735.9 206.0 738.5 205.0 741.0 204.0 743.6 203.0 746.1 202.1 748.7 201.1 751.2 200.2 753.8 199.3 756.3 198.4 758.8 197.5 761.3 196.6 763.9 195.8 766.4 195.0 768.8 194.2 771.3 193.4 773.8 192.6 776.3 191.8 778.8 191.1 781.2 190.4 783.7 189.7 786.1 189.0 788.5 188.3 790.9 187.7 793.3 187.0 795.7 186.4 798.1 185.9 800.5 185.3 802.9 184.7 805.3 184.2 807.6 183.7 810.0 183.3 812.3 182.8 814.6 182.4 816.9 182.0 819.3 181.6 821.6 181.2 823.8 180.9 826.1 180.5 828.4 180.2 830.7 180.0 832.9 179.7 835.2 179.5 837.4 179.3 839.6 179.1 841.9 179.0 844.1 178.8 846.3 178.7 848.5 178.7 850.7 178.6 852.9 178.6 855.1 178.6 857.3 178.6 859.4 178.6 861.6 178.7 863.8 178.8 865.9 178.9 868.1 179.0 870.2 179.2 872.4 179.4 874.5 179.6 876.7 179.8 878.8 180.1 880.9 180.4 883.1 180.7 885.2 181.0 887.3 181.3 889.4 181.7 891.6 182.1 893.7 182.5 895.8 183.0 897.9 183.4 900.1 183.9 902.2 184.4 904.3 184.9" fill="none" stroke="#2db37e" stroke-width="1.25" stroke-dasharray="1.4 2.1"/>
<path d="M904.3 184.9 906.5 185.5 908.7 186.0 910.9 186.6 913.1 187.2 915.3 187.8 917.4 188.5 919.6 189.1 921.8 189.8 924.0 190.5 926.2 191.3" fill="none" stroke="#2db37e" stroke-width="1.6"/>
<circle cx="926.2" cy="191.3" r="1.3" fill="#ff5a3c"/>
<path d="M585.8 269.9 586.6 268.2 587.6 266.4 588.7 264.7 589.9 263.0 591.3 261.4 592.7 259.8 594.3 258.2 596.0 256.7 597.8 255.2 599.6 253.8 601.5 252.5 603.5 251.3 605.5 250.1 607.5 249.1 609.6 248.1 611.6 247.3 613.6 246.6 615.7 245.9 617.6 245.4 619.5 245.1 621.4 244.8 623.2 244.7 624.9 244.7 626.6 244.8 628.1 245.1 629.6 245.4 630.9 245.9 632.1 246.6 633.3 247.3 634.3 248.1 635.2 249.1 635.9 250.1 636.6 251.3 637.1 252.5 637.5 253.8 637.8 255.2 638.0 256.7 638.0 258.2 638.0 259.8 637.8 261.4 637.5 263.0 637.1 264.7 636.6 266.4 636.0 268.2 635.3 269.9 634.5 271.6 633.6 273.3 632.7 275.0 631.6 276.6 630.5 278.3 629.3 279.8 628.0 281.4 626.6 282.8 625.2 284.2 623.7 285.6 622.2 286.8 620.6 288.0 619.0 289.1 617.3 290.1 615.6 291.0 613.9 291.7 612.2 292.4 610.4 293.0 608.7 293.5 606.9 293.8 605.1 294.0 603.4 294.2 601.7 294.2 600.0 294.0 598.3 293.8 596.7 293.5 595.2 293.0 593.7 292.4 592.3 291.7 590.9 291.0 589.7 290.1 588.6 289.1 587.5 288.0 586.6 286.8 585.8 285.6 585.2 284.2 584.7 282.8 584.3 281.4 584.0 279.8 584.0 278.3 584.0 276.6 584.2 275.0 584.6 273.3 585.1 271.6 585.8 269.9Z" fill="none" stroke="#2db37e" stroke-width="1.9"/>
<text x="610.63" y="272.20" text-anchor="middle" font-size="11.65" fill="#fff" textLength="19.72" lengthAdjust="spacingAndGlyphs">ORI</text>
<path d="M609.64 269.73h4.2M611.74 267.63v4.2" stroke="#ff0000" stroke-width="1.1"/>
<text class="m" x="315.60" y="29.70" text-anchor="start" font-size="15.29" fill="#f2f2f2" textLength="50.21" lengthAdjust="spacingAndGlyphs" xml:space="preserve">BE0005</text>
<text class="m" x="315.60" y="42.73" text-anchor="start" font-size="15.29" fill="#f2f2f2" textLength="318.00" lengthAdjust="spacingAndGlyphs" xml:space="preserve">Beg: 20251018 03:46:27 (sol = 204.67°)</text>
<text class="m" x="315.60" y="55.76" text-anchor="start" font-size="15.29" fill="#f2f2f2" textLength="318.00" lengthAdjust="spacingAndGlyphs" xml:space="preserve">End: 20251018 03:46:27 (sol = 204.67°)</text>
<text class="m" x="315.60" y="68.79" text-anchor="start" font-size="15.29" fill="#f2f2f2" textLength="318.00" lengthAdjust="spacingAndGlyphs" xml:space="preserve">--------------------------------------</text>
<text class="m" x="315.60" y="81.82" text-anchor="start" font-size="15.29" fill="#f2f2f2" textLength="50.21" lengthAdjust="spacingAndGlyphs" xml:space="preserve">ORI: 1</text>
<rect x="105.8" y="831.92" width="24.3" height="4.17" fill="#bddf26"/>
<rect x="164.9" y="831.92" width="180.0" height="4.17" fill="#bddf26"/>
<rect x="366.0" y="831.92" width="258.9" height="4.17" fill="#bddf26"/>
<rect x="636.1" y="831.92" width="150.8" height="4.17" fill="#bddf26"/>
<rect x="807.0" y="831.92" width="92.9" height="4.17" fill="#bddf26"/>
<rect x="919.9" y="831.92" width="52.8" height="4.17" fill="#bddf26"/>
<rect x="984.1" y="831.92" width="81.8" height="4.17" fill="#bddf26"/>
<rect x="1082.0" y="831.92" width="122.0" height="4.17" fill="#bddf26"/>
<rect x="1244.0" y="831.92" width="81.9" height="4.17" fill="#bddf26"/>
<rect x="1336.9" y="831.92" width="19.0" height="4.17" fill="#bddf26"/>
<rect x="1380.8" y="831.92" width="63.1" height="4.17" fill="#bddf26"/>
<rect x="1459.0" y="831.92" width="53.0" height="4.17" fill="#bddf26"/>
<rect x="1523.0" y="831.92" width="24.0" height="4.17" fill="#bddf26"/>
<rect x="1724.1" y="831.92" width="23.7" height="4.17" fill="#bddf26"/>
<rect x="1758.3" y="831.92" width="23.7" height="4.17" fill="#bddf26"/>
<rect x="164.9" y="815.57" width="24.3" height="4.17" fill="#81d34d"/>
<rect x="224.0" y="815.57" width="62.9" height="4.17" fill="#81d34d"/>
<rect x="312.0" y="815.57" width="29.0" height="4.17" fill="#81d34d"/>
<rect x="366.0" y="815.57" width="127.1" height="4.17" fill="#81d34d"/>
<rect x="507.9" y="815.57" width="146.2" height="4.17" fill="#81d34d"/>
<rect x="704.1" y="815.57" width="33.8" height="4.17" fill="#81d34d"/>
<rect x="773.1" y="815.57" width="72.8" height="4.17" fill="#81d34d"/>
<rect x="871.0" y="815.57" width="116.9" height="4.17" fill="#81d34d"/>
<rect x="1003.1" y="815.57" width="13.8" height="4.17" fill="#81d34d"/>
<rect x="1061.9" y="815.57" width="151.2" height="4.17" fill="#81d34d"/>
<rect x="1244.0" y="815.57" width="23.0" height="4.17" fill="#81d34d"/>
<rect x="1293.0" y="815.57" width="23.0" height="4.17" fill="#81d34d"/>
<rect x="1342.2" y="815.57" width="22.8" height="4.17" fill="#81d34d"/>
<rect x="1385.9" y="815.57" width="43.0" height="4.17" fill="#81d34d"/>
<rect x="1459.0" y="815.57" width="24.1" height="4.17" fill="#81d34d"/>
<rect x="1548.1" y="815.57" width="22.8" height="4.17" fill="#81d34d"/>
<rect x="164.9" y="799.22" width="24.3" height="4.17" fill="#4ec36b"/>
<rect x="258.0" y="799.22" width="230.0" height="4.17" fill="#4ec36b"/>
<rect x="507.9" y="799.22" width="106.9" height="4.17" fill="#4ec36b"/>
<rect x="626.0" y="799.22" width="92.0" height="4.17" fill="#4ec36b"/>
<rect x="729.0" y="799.22" width="97.0" height="4.17" fill="#4ec36b"/>
<rect x="949.1" y="799.22" width="200.9" height="4.17" fill="#4ec36b"/>
<rect x="1159.9" y="799.22" width="88.0" height="4.17" fill="#4ec36b"/>
<rect x="1258.2" y="799.22" width="185.7" height="4.17" fill="#4ec36b"/>
<rect x="1459.0" y="799.22" width="24.1" height="4.17" fill="#4ec36b"/>
<rect x="1552.9" y="799.22" width="23.0" height="4.17" fill="#4ec36b"/>
<rect x="193.8" y="782.87" width="24.5" height="4.17" fill="#2ab07f"/>
<rect x="322.1" y="782.87" width="184.7" height="4.17" fill="#2ab07f"/>
<rect x="518.0" y="782.87" width="24.1" height="4.17" fill="#2ab07f"/>
<rect x="557.0" y="782.87" width="127.0" height="4.17" fill="#2ab07f"/>
<rect x="807.0" y="782.87" width="23.9" height="4.17" fill="#2ab07f"/>
<rect x="954.1" y="782.87" width="18.6" height="4.17" fill="#2ab07f"/>
<rect x="989.0" y="782.87" width="136.0" height="4.17" fill="#2ab07f"/>
<rect x="1155.0" y="782.87" width="62.9" height="4.17" fill="#2ab07f"/>
<rect x="1244.0" y="782.87" width="23.0" height="4.17" fill="#2ab07f"/>
<rect x="1317.0" y="782.87" width="23.9" height="4.17" fill="#2ab07f"/>
<rect x="1396.0" y="782.87" width="23.0" height="4.17" fill="#2ab07f"/>
<rect x="1464.1" y="782.87" width="185.9" height="4.17" fill="#2ab07f"/>
<rect x="341.1" y="766.52" width="28.9" height="4.17" fill="#1e9b8a"/>
<rect x="410.1" y="766.52" width="37.8" height="4.17" fill="#1e9b8a"/>
<rect x="469.0" y="766.52" width="24.1" height="4.17" fill="#1e9b8a"/>
<rect x="527.9" y="766.52" width="18.0" height="4.17" fill="#1e9b8a"/>
<rect x="562.0" y="766.52" width="29.0" height="4.17" fill="#1e9b8a"/>
<rect x="616.1" y="766.52" width="32.9" height="4.17" fill="#1e9b8a"/>
<rect x="959.0" y="766.52" width="28.9" height="4.17" fill="#1e9b8a"/>
<rect x="1061.9" y="766.52" width="24.1" height="4.17" fill="#1e9b8a"/>
<rect x="1101.0" y="766.52" width="24.0" height="4.17" fill="#1e9b8a"/>
<rect x="1159.9" y="766.52" width="34.0" height="4.17" fill="#1e9b8a"/>
<rect x="1249.1" y="766.52" width="23.0" height="4.17" fill="#1e9b8a"/>
<rect x="1425.1" y="766.52" width="86.9" height="4.17" fill="#1e9b8a"/>
<rect x="420.1" y="750.17" width="24.0" height="4.17" fill="#25858e"/>
<rect x="533.2" y="750.17" width="22.8" height="4.17" fill="#25858e"/>
<rect x="567.1" y="750.17" width="23.9" height="4.17" fill="#25858e"/>
<rect x="621.1" y="750.17" width="121.8" height="4.17" fill="#25858e"/>
<rect x="969.1" y="750.17" width="165.9" height="4.17" fill="#25858e"/>
<rect x="1185.0" y="750.17" width="161.0" height="4.17" fill="#25858e"/>
<rect x="1469.1" y="750.17" width="23.9" height="4.17" fill="#25858e"/>
<rect x="430.2" y="733.82" width="22.8" height="4.17" fill="#2d708e"/>
<rect x="577.0" y="733.82" width="155.8" height="4.17" fill="#2d708e"/>
<rect x="994.0" y="733.82" width="111.0" height="4.17" fill="#2d708e"/>
<rect x="1116.0" y="733.82" width="106.8" height="4.17" fill="#2d708e"/>
<rect x="1263.2" y="733.82" width="28.7" height="4.17" fill="#2d708e"/>
<rect x="1489.0" y="733.82" width="23.0" height="4.17" fill="#2d708e"/>
<rect x="592.0" y="717.47" width="22.8" height="4.17" fill="#375a8c"/>
<rect x="655.1" y="717.47" width="117.0" height="4.17" fill="#375a8c"/>
<rect x="1071.8" y="717.47" width="171.2" height="4.17" fill="#375a8c"/>
<rect x="1263.2" y="717.47" width="23.7" height="4.17" fill="#375a8c"/>
<rect x="596.0" y="701.12" width="136.8" height="4.17" fill="#424086"/>
<rect x="1091.9" y="701.12" width="28.1" height="4.17" fill="#424086"/>
<rect x="1200.0" y="701.12" width="22.8" height="4.17" fill="#424086"/>
<rect x="1273.1" y="701.12" width="52.8" height="4.17" fill="#424086"/>
<rect x="1111.1" y="684.77" width="23.9" height="4.17" fill="#482475"/>
<path d="M75.0 842.3V641.4 M218.9 842.3V641.4 M365.0 842.3V641.4 M505.8 842.3V641.4 M650.9 842.3V641.4 M796.9 842.3V641.4 M940.0 842.3V641.4 M1090.8 842.3V641.4 M1239.0 842.3V641.4 M1394.1 842.3V641.4 M1548.1 842.3V641.4 M1687.1 842.3V641.4" stroke="#fff" stroke-opacity="0.36" stroke-width="2.06" stroke-dasharray="2.06 3.4" fill="none"/>
<text transform="translate(149.00,671.00) rotate(-90)" text-anchor="middle" font-size="29.47" fill="#5a5a5a" stroke="#5a5a5a" stroke-width="0.15" textLength="56.33" lengthAdjust="spacingAndGlyphs">APR</text>
<text transform="translate(295.00,672.75) rotate(-90)" text-anchor="middle" font-size="29.47" fill="#5a5a5a" stroke="#5a5a5a" stroke-width="0.15" textLength="57.25" lengthAdjust="spacingAndGlyphs">MAY</text>
<text transform="translate(436.00,665.50) rotate(-90)" text-anchor="middle" font-size="29.47" fill="#5a5a5a" stroke="#5a5a5a" stroke-width="0.15" textLength="49.14" lengthAdjust="spacingAndGlyphs">JUN</text>
<text transform="translate(576.50,663.75) rotate(-90)" text-anchor="middle" font-size="29.47" fill="#5a5a5a" stroke="#5a5a5a" stroke-width="0.15" textLength="44.65" lengthAdjust="spacingAndGlyphs">JUL</text>
<text transform="translate(724.00,671.50) rotate(-90)" text-anchor="middle" font-size="29.47" fill="#5a5a5a" stroke="#5a5a5a" stroke-width="0.15" textLength="57.83" lengthAdjust="spacingAndGlyphs">AUG</text>
<text transform="translate(872.00,668.75) rotate(-90)" text-anchor="middle" font-size="29.47" fill="#5a5a5a" stroke="#5a5a5a" stroke-width="0.15" textLength="50.76" lengthAdjust="spacingAndGlyphs">SEP</text>
<text transform="translate(1017.00,672.25) rotate(-90)" text-anchor="middle" font-size="29.47" fill="#5a5a5a" stroke="#5a5a5a" stroke-width="0.15" textLength="57.07" lengthAdjust="spacingAndGlyphs">OCT</text>
<text transform="translate(1170.50,675.00) rotate(-90)" text-anchor="middle" font-size="29.47" fill="#5a5a5a" stroke="#5a5a5a" stroke-width="0.15" textLength="58.82" lengthAdjust="spacingAndGlyphs">NOV</text>
<text transform="translate(1318.50,673.00) rotate(-90)" text-anchor="middle" font-size="29.47" fill="#5a5a5a" stroke="#5a5a5a" stroke-width="0.15" textLength="55.49" lengthAdjust="spacingAndGlyphs">DEC</text>
<text transform="translate(1468.50,664.75) rotate(-90)" text-anchor="middle" font-size="29.47" fill="#5a5a5a" stroke="#5a5a5a" stroke-width="0.15" textLength="46.98" lengthAdjust="spacingAndGlyphs">JAN</text>
<text transform="translate(1628.50,671.00) rotate(-90)" text-anchor="middle" font-size="29.47" fill="#5a5a5a" stroke="#5a5a5a" stroke-width="0.15" textLength="49.69" lengthAdjust="spacingAndGlyphs">FEB</text>
<text transform="translate(1765.50,675.00) rotate(-90)" text-anchor="middle" font-size="29.47" fill="#5a5a5a" stroke="#5a5a5a" stroke-width="0.15" textLength="60.46" lengthAdjust="spacingAndGlyphs">MAR</text>
<path d="M113.4 834.0h8.3M117.6 829.9v8.3" stroke="#fff" stroke-width="2.4"/>
<text x="117.02" y="831.40" text-anchor="middle" font-size="11.34" fill="#fff" textLength="20.76" lengthAdjust="spacingAndGlyphs">KSE</text>
<path d="M240.7 834.0h8.3M244.8 829.9v8.3" stroke="#fff" stroke-width="2.4"/>
<text x="254.41" y="831.40" text-anchor="middle" font-size="11.34" fill="#fff" textLength="20.81" lengthAdjust="spacingAndGlyphs">ETA</text>
<path d="M510.6 834.0h8.3M514.8 829.9v8.3" stroke="#fff" stroke-width="2.4"/>
<text x="495.26" y="831.40" text-anchor="middle" font-size="11.34" fill="#fff" textLength="23.02" lengthAdjust="spacingAndGlyphs">NZC</text>
<path d="M706.6 834.0h8.3M710.8 829.9v8.3" stroke="#fff" stroke-width="2.4"/>
<text x="710.21" y="831.40" text-anchor="middle" font-size="11.34" fill="#fff" textLength="23.78" lengthAdjust="spacingAndGlyphs">NDA</text>
<path d="M833.5 834.0h8.3M837.6 829.9v8.3" stroke="#fff" stroke-width="2.4"/>
<text x="853.89" y="831.40" text-anchor="middle" font-size="11.34" fill="#fff" textLength="20.19" lengthAdjust="spacingAndGlyphs">SPE</text>
<path d="M961.6 834.0h8.3M965.8 829.9v8.3" stroke="#fff" stroke-width="2.4"/>
<text x="946.68" y="831.40" text-anchor="middle" font-size="11.34" fill="#fff" textLength="23.21" lengthAdjust="spacingAndGlyphs">ARD</text>
<path d="M986.6 834.0h8.3M990.7 829.9v8.3" stroke="#fff" stroke-width="2.4"/>
<text x="1024.42" y="831.40" text-anchor="middle" font-size="11.34" fill="#fff" textLength="22.02" lengthAdjust="spacingAndGlyphs">EGE</text>
<path d="M1116.4 834.0h8.3M1120.6 829.9v8.3" stroke="#fff" stroke-width="2.4"/>
<text x="1142.01" y="831.40" text-anchor="middle" font-size="11.34" fill="#fff" textLength="22.06" lengthAdjust="spacingAndGlyphs">NTA</text>
<path d="M1295.5 834.0h8.3M1299.7 829.9v8.3" stroke="#fff" stroke-width="2.4"/>
<text x="1285.00" y="831.40" text-anchor="middle" font-size="11.34" fill="#fff" textLength="25.90" lengthAdjust="spacingAndGlyphs">MON</text>
<path d="M1341.6 834.0h8.3M1345.8 829.9v8.3" stroke="#fff" stroke-width="2.4"/>
<text x="1343.53" y="831.40" text-anchor="middle" font-size="11.34" fill="#fff" textLength="22.26" lengthAdjust="spacingAndGlyphs">URS</text>
<path d="M1412.8 834.0h8.3M1416.9 829.9v8.3" stroke="#fff" stroke-width="2.4"/>
<text x="1411.95" y="831.40" text-anchor="middle" font-size="11.34" fill="#fff" textLength="22.11" lengthAdjust="spacingAndGlyphs">AHY</text>
<path d="M1481.6 834.0h8.3M1485.8 829.9v8.3" stroke="#fff" stroke-width="2.4"/>
<text x="1485.62" y="831.40" text-anchor="middle" font-size="11.34" fill="#fff" textLength="25.59" lengthAdjust="spacingAndGlyphs">GUM</text>
<path d="M1530.6 834.0h8.3M1534.8 829.9v8.3" stroke="#fff" stroke-width="2.4"/>
<text x="1534.99" y="831.40" text-anchor="middle" font-size="11.34" fill="#fff" textLength="23.22" lengthAdjust="spacingAndGlyphs">OHY</text>
<path d="M1731.6 834.0h8.3M1735.8 829.9v8.3" stroke="#fff" stroke-width="2.4"/>
<text x="1736.28" y="831.40" text-anchor="middle" font-size="11.34" fill="#fff" textLength="22.34" lengthAdjust="spacingAndGlyphs">XHE</text>
<path d="M1765.5 834.0h8.3M1769.7 829.9v8.3" stroke="#fff" stroke-width="2.4"/>
<text x="1769.90" y="831.40" text-anchor="middle" font-size="11.34" fill="#fff" textLength="17.40" lengthAdjust="spacingAndGlyphs">EVI</text>
<path d="M172.3 817.6h8.3M176.5 813.5v8.3" stroke="#fff" stroke-width="2.4"/>
<text x="176.84" y="815.05" text-anchor="middle" font-size="11.34" fill="#fff" textLength="22.19" lengthAdjust="spacingAndGlyphs">AVB</text>
<path d="M255.7 817.6h8.3M259.8 813.5v8.3" stroke="#fff" stroke-width="2.4"/>
<text x="254.36" y="815.05" text-anchor="middle" font-size="11.34" fill="#fff" textLength="19.44" lengthAdjust="spacingAndGlyphs">ELY</text>
<path d="M323.6 817.6h8.3M327.7 813.5v8.3" stroke="#fff" stroke-width="2.4"/>
<text x="324.02" y="815.05" text-anchor="middle" font-size="11.34" fill="#fff" textLength="24.25" lengthAdjust="spacingAndGlyphs">CAM</text>
<path d="M437.7 817.6h8.3M441.8 813.5v8.3" stroke="#fff" stroke-width="2.4"/>
<text x="431.99" y="815.05" text-anchor="middle" font-size="11.34" fill="#fff" textLength="22.08" lengthAdjust="spacingAndGlyphs">SSG</text>
<path d="M598.6 817.6h8.3M602.8 813.5v8.3" stroke="#fff" stroke-width="2.4"/>
<text x="578.31" y="815.05" text-anchor="middle" font-size="11.34" fill="#fff" textLength="21.44" lengthAdjust="spacingAndGlyphs">PCA</text>
<path d="M716.5 817.6h8.3M720.6 813.5v8.3" stroke="#fff" stroke-width="2.4"/>
<text x="720.68" y="815.05" text-anchor="middle" font-size="11.34" fill="#fff" textLength="23.61" lengthAdjust="spacingAndGlyphs">AUD</text>
<path d="M793.6 817.6h8.3M797.7 813.5v8.3" stroke="#fff" stroke-width="2.4"/>
<text x="809.41" y="815.05" text-anchor="middle" font-size="11.34" fill="#fff" textLength="22.80" lengthAdjust="spacingAndGlyphs">AUR</text>
<path d="M939.6 817.6h8.3M943.8 813.5v8.3" stroke="#fff" stroke-width="2.4"/>
<text x="930.54" y="815.05" text-anchor="middle" font-size="11.34" fill="#fff" textLength="22.57" lengthAdjust="spacingAndGlyphs">DSX</text>
<path d="M1006.0 817.6h8.3M1010.1 813.5v8.3" stroke="#fff" stroke-width="2.4"/>
<text x="1011.77" y="815.05" text-anchor="middle" font-size="11.34" fill="#fff" textLength="23.95" lengthAdjust="spacingAndGlyphs">OCU</text>
<path d="M1152.5 817.6h8.3M1156.7 813.5v8.3" stroke="#fff" stroke-width="2.4"/>
<text x="1137.85" y="815.05" text-anchor="middle" font-size="11.34" fill="#fff" textLength="22.83" lengthAdjust="spacingAndGlyphs">OER</text>
<path d="M1250.6 817.6h8.3M1254.8 813.5v8.3" stroke="#fff" stroke-width="2.4"/>
<text x="1254.59" y="815.05" text-anchor="middle" font-size="11.34" fill="#fff" textLength="23.71" lengthAdjust="spacingAndGlyphs">DKD</text>
<path d="M1299.5 817.6h8.3M1303.7 813.5v8.3" stroke="#fff" stroke-width="2.4"/>
<text x="1303.61" y="815.05" text-anchor="middle" font-size="11.34" fill="#fff" textLength="22.56" lengthAdjust="spacingAndGlyphs">DSV</text>
<path d="M1349.4 817.6h8.3M1353.6 813.5v8.3" stroke="#fff" stroke-width="2.4"/>
<text x="1352.95" y="815.05" text-anchor="middle" font-size="11.34" fill="#fff" textLength="20.00" lengthAdjust="spacingAndGlyphs">ALY</text>
<path d="M1402.6 817.6h8.3M1406.8 813.5v8.3" stroke="#fff" stroke-width="2.4"/>
<text x="1408.12" y="815.05" text-anchor="middle" font-size="11.34" fill="#fff" textLength="16.03" lengthAdjust="spacingAndGlyphs">JLE</text>
<path d="M1466.6 817.6h8.3M1470.8 813.5v8.3" stroke="#fff" stroke-width="2.4"/>
<text x="1471.64" y="815.05" text-anchor="middle" font-size="11.34" fill="#fff" textLength="21.94" lengthAdjust="spacingAndGlyphs">SCC</text>
<path d="M1554.6 817.6h8.3M1558.8 813.5v8.3" stroke="#fff" stroke-width="2.4"/>
<text x="1558.51" y="815.05" text-anchor="middle" font-size="11.34" fill="#fff" textLength="20.42" lengthAdjust="spacingAndGlyphs">FEV</text>
<path d="M174.8 801.3h8.3M178.9 797.1v8.3" stroke="#fff" stroke-width="2.4"/>
<text x="175.83" y="798.70" text-anchor="middle" font-size="11.34" fill="#fff" textLength="20.12" lengthAdjust="spacingAndGlyphs">LYR</text>
<path d="M378.6 801.3h8.3M382.7 797.1v8.3" stroke="#fff" stroke-width="2.4"/>
<text x="373.37" y="798.70" text-anchor="middle" font-size="11.34" fill="#fff" textLength="20.04" lengthAdjust="spacingAndGlyphs">JMC</text>
<path d="M547.0 801.3h8.3M551.1 797.1v8.3" stroke="#fff" stroke-width="2.4"/>
<text x="559.62" y="798.70" text-anchor="middle" font-size="11.34" fill="#fff" textLength="16.52" lengthAdjust="spacingAndGlyphs">JPE</text>
<path d="M682.6 801.3h8.3M686.8 797.1v8.3" stroke="#fff" stroke-width="2.4"/>
<text x="671.24" y="798.70" text-anchor="middle" font-size="11.34" fill="#fff" textLength="21.81" lengthAdjust="spacingAndGlyphs">PAU</text>
<path d="M741.8 801.3h8.3M745.9 797.1v8.3" stroke="#fff" stroke-width="2.4"/>
<text x="774.01" y="798.70" text-anchor="middle" font-size="11.34" fill="#fff" textLength="18.65" lengthAdjust="spacingAndGlyphs">NIA</text>
<path d="M1074.6 801.3h8.3M1078.8 797.1v8.3" stroke="#fff" stroke-width="2.4"/>
<text x="1049.49" y="798.70" text-anchor="middle" font-size="11.34" fill="#fff" textLength="20.84" lengthAdjust="spacingAndGlyphs">STA</text>
<path d="M1216.5 801.3h8.3M1220.7 797.1v8.3" stroke="#fff" stroke-width="2.4"/>
<text x="1206.07" y="798.70" text-anchor="middle" font-size="11.34" fill="#fff" textLength="25.08" lengthAdjust="spacingAndGlyphs">NOO</text>
<path d="M1304.4 801.3h8.3M1308.6 797.1v8.3" stroke="#fff" stroke-width="2.4"/>
<text x="1353.72" y="798.70" text-anchor="middle" font-size="11.34" fill="#fff" textLength="25.36" lengthAdjust="spacingAndGlyphs">COM</text>
<path d="M1466.6 801.3h8.3M1470.8 797.1v8.3" stroke="#fff" stroke-width="2.4"/>
<text x="1470.26" y="798.70" text-anchor="middle" font-size="11.34" fill="#fff" textLength="23.16" lengthAdjust="spacingAndGlyphs">NCC</text>
<path d="M1559.8 801.3h8.3M1563.9 797.1v8.3" stroke="#fff" stroke-width="2.4"/>
<text x="1564.19" y="798.70" text-anchor="middle" font-size="11.34" fill="#fff" textLength="21.35" lengthAdjust="spacingAndGlyphs">FED</text>
<path d="M201.5 785.0h8.3M205.7 780.8v8.3" stroke="#fff" stroke-width="2.4"/>
<text x="206.30" y="782.35" text-anchor="middle" font-size="11.34" fill="#fff" textLength="18.69" lengthAdjust="spacingAndGlyphs">HVI</text>
<path d="M400.7 785.0h8.3M404.8 780.8v8.3" stroke="#fff" stroke-width="2.4"/>
<text x="412.49" y="782.35" text-anchor="middle" font-size="11.34" fill="#fff" textLength="18.08" lengthAdjust="spacingAndGlyphs">ARI</text>
<path d="M525.5 785.0h8.3M529.6 780.8v8.3" stroke="#fff" stroke-width="2.4"/>
<text x="529.64" y="782.35" text-anchor="middle" font-size="11.34" fill="#fff" textLength="21.80" lengthAdjust="spacingAndGlyphs">SZC</text>
<path d="M638.8 785.0h8.3M642.9 780.8v8.3" stroke="#fff" stroke-width="2.4"/>
<text x="618.48" y="782.35" text-anchor="middle" font-size="11.34" fill="#fff" textLength="21.44" lengthAdjust="spacingAndGlyphs">CAP</text>
<path d="M814.6 785.0h8.3M818.8 780.8v8.3" stroke="#fff" stroke-width="2.4"/>
<text x="818.12" y="782.35" text-anchor="middle" font-size="11.34" fill="#fff" textLength="22.81" lengthAdjust="spacingAndGlyphs">NUE</text>
<path d="M959.8 785.0h8.3M963.9 780.8v8.3" stroke="#fff" stroke-width="2.4"/>
<text x="960.88" y="782.35" text-anchor="middle" font-size="11.34" fill="#fff" textLength="22.64" lengthAdjust="spacingAndGlyphs">OCT</text>
<path d="M1040.6 785.0h8.3M1044.8 780.8v8.3" stroke="#fff" stroke-width="2.4"/>
<text x="1059.33" y="782.35" text-anchor="middle" font-size="11.34" fill="#fff" textLength="19.19" lengthAdjust="spacingAndGlyphs">ORI</text>
<path d="M1187.8 785.0h8.3M1192.0 780.8v8.3" stroke="#fff" stroke-width="2.4"/>
<text x="1186.76" y="782.35" text-anchor="middle" font-size="11.34" fill="#fff" textLength="25.21" lengthAdjust="spacingAndGlyphs">AMO</text>
<path d="M1250.6 785.0h8.3M1254.8 780.8v8.3" stroke="#fff" stroke-width="2.4"/>
<text x="1255.06" y="782.35" text-anchor="middle" font-size="11.34" fill="#fff" textLength="22.37" lengthAdjust="spacingAndGlyphs">DPC</text>
<path d="M1324.5 785.0h8.3M1328.7 780.8v8.3" stroke="#fff" stroke-width="2.4"/>
<text x="1329.57" y="782.35" text-anchor="middle" font-size="11.34" fill="#fff" textLength="17.97" lengthAdjust="spacingAndGlyphs">XVI</text>
<path d="M1402.6 785.0h8.3M1406.8 780.8v8.3" stroke="#fff" stroke-width="2.4"/>
<text x="1407.34" y="782.35" text-anchor="middle" font-size="11.34" fill="#fff" textLength="23.79" lengthAdjust="spacingAndGlyphs">QUA</text>
<path d="M1545.6 785.0h8.3M1549.8 780.8v8.3" stroke="#fff" stroke-width="2.4"/>
<text x="1559.99" y="782.35" text-anchor="middle" font-size="11.34" fill="#fff" textLength="22.86" lengthAdjust="spacingAndGlyphs">AAN</text>
<path d="M356.0 768.6h8.3M360.1 764.5v8.3" stroke="#fff" stroke-width="2.4"/>
<text x="353.45" y="766.00" text-anchor="middle" font-size="11.34" fill="#fff" textLength="22.11" lengthAdjust="spacingAndGlyphs">TAH</text>
<path d="M426.5 768.6h8.3M430.6 764.5v8.3" stroke="#fff" stroke-width="2.4"/>
<text x="432.02" y="766.00" text-anchor="middle" font-size="11.34" fill="#fff" textLength="17.40" lengthAdjust="spacingAndGlyphs">JEA</text>
<path d="M476.7 768.6h8.3M480.8 764.5v8.3" stroke="#fff" stroke-width="2.4"/>
<text x="481.66" y="766.00" text-anchor="middle" font-size="11.34" fill="#fff" textLength="12.88" lengthAdjust="spacingAndGlyphs">JIP</text>
<path d="M535.4 768.6h8.3M539.5 764.5v8.3" stroke="#fff" stroke-width="2.4"/>
<text x="538.47" y="766.00" text-anchor="middle" font-size="11.34" fill="#fff" textLength="19.88" lengthAdjust="spacingAndGlyphs">PPS</text>
<path d="M570.8 768.6h8.3M574.9 764.5v8.3" stroke="#fff" stroke-width="2.4"/>
<text x="578.86" y="766.00" text-anchor="middle" font-size="11.34" fill="#fff" textLength="21.80" lengthAdjust="spacingAndGlyphs">ZCS</text>
<path d="M630.5 768.6h8.3M634.6 764.5v8.3" stroke="#fff" stroke-width="2.4"/>
<text x="632.65" y="766.00" text-anchor="middle" font-size="11.34" fill="#fff" textLength="24.19" lengthAdjust="spacingAndGlyphs">GDR</text>
<path d="M973.6 768.6h8.3M977.8 764.5v8.3" stroke="#fff" stroke-width="2.4"/>
<text x="970.71" y="766.00" text-anchor="middle" font-size="11.34" fill="#fff" textLength="23.21" lengthAdjust="spacingAndGlyphs">DRA</text>
<path d="M1069.5 768.6h8.3M1073.7 764.5v8.3" stroke="#fff" stroke-width="2.4"/>
<text x="1073.10" y="766.00" text-anchor="middle" font-size="11.34" fill="#fff" textLength="23.24" lengthAdjust="spacingAndGlyphs">LUM</text>
<path d="M1108.6 768.6h8.3M1112.8 764.5v8.3" stroke="#fff" stroke-width="2.4"/>
<text x="1112.84" y="766.00" text-anchor="middle" font-size="11.34" fill="#fff" textLength="21.92" lengthAdjust="spacingAndGlyphs">RPU</text>
<path d="M1177.8 768.6h8.3M1182.0 764.5v8.3" stroke="#fff" stroke-width="2.4"/>
<text x="1177.26" y="766.00" text-anchor="middle" font-size="11.34" fill="#fff" textLength="22.11" lengthAdjust="spacingAndGlyphs">THA</text>
<path d="M1255.6 768.6h8.3M1259.8 764.5v8.3" stroke="#fff" stroke-width="2.4"/>
<text x="1259.34" y="766.00" text-anchor="middle" font-size="11.34" fill="#fff" textLength="21.27" lengthAdjust="spacingAndGlyphs">PSU</text>
<path d="M1466.6 768.6h8.3M1470.8 764.5v8.3" stroke="#fff" stroke-width="2.4"/>
<text x="1470.82" y="766.00" text-anchor="middle" font-size="11.34" fill="#fff" textLength="22.35" lengthAdjust="spacingAndGlyphs">XCB</text>
<path d="M427.8 752.2h8.3M431.9 748.1v8.3" stroke="#fff" stroke-width="2.4"/>
<text x="432.47" y="749.65" text-anchor="middle" font-size="11.34" fill="#fff" textLength="18.23" lengthAdjust="spacingAndGlyphs">JRC</text>
<path d="M539.6 752.2h8.3M543.7 748.1v8.3" stroke="#fff" stroke-width="2.4"/>
<text x="544.53" y="749.65" text-anchor="middle" font-size="11.34" fill="#fff" textLength="23.01" lengthAdjust="spacingAndGlyphs">CAN</text>
<path d="M574.8 752.2h8.3M578.9 748.1v8.3" stroke="#fff" stroke-width="2.4"/>
<text x="578.30" y="749.65" text-anchor="middle" font-size="11.34" fill="#fff" textLength="21.68" lengthAdjust="spacingAndGlyphs">FAN</text>
<path d="M703.8 752.2h8.3M707.9 748.1v8.3" stroke="#fff" stroke-width="2.4"/>
<text x="680.83" y="749.65" text-anchor="middle" font-size="11.34" fill="#fff" textLength="20.84" lengthAdjust="spacingAndGlyphs">PER</text>
<path d="M1094.8 752.2h8.3M1098.9 748.1v8.3" stroke="#fff" stroke-width="2.4"/>
<text x="1049.84" y="749.65" text-anchor="middle" font-size="11.34" fill="#fff" textLength="21.53" lengthAdjust="spacingAndGlyphs">CTA</text>
<path d="M1270.6 752.2h8.3M1274.8 748.1v8.3" stroke="#fff" stroke-width="2.4"/>
<text x="1265.29" y="749.65" text-anchor="middle" font-size="11.34" fill="#fff" textLength="23.03" lengthAdjust="spacingAndGlyphs">HYD</text>
<path d="M1476.5 752.2h8.3M1480.7 748.1v8.3" stroke="#fff" stroke-width="2.4"/>
<text x="1481.57" y="749.65" text-anchor="middle" font-size="11.34" fill="#fff" textLength="24.62" lengthAdjust="spacingAndGlyphs">XUM</text>
<path d="M437.5 735.9h8.3M441.6 731.8v8.3" stroke="#fff" stroke-width="2.4"/>
<text x="441.45" y="733.30" text-anchor="middle" font-size="11.34" fill="#fff" textLength="23.55" lengthAdjust="spacingAndGlyphs">COR</text>
<path d="M630.5 735.9h8.3M634.6 731.8v8.3" stroke="#fff" stroke-width="2.4"/>
<text x="657.79" y="733.30" text-anchor="middle" font-size="11.34" fill="#fff" textLength="22.56" lengthAdjust="spacingAndGlyphs">SDA</text>
<path d="M1038.5 735.9h8.3M1042.7 731.8v8.3" stroke="#fff" stroke-width="2.4"/>
<text x="1048.80" y="733.30" text-anchor="middle" font-size="11.34" fill="#fff" textLength="18.52" lengthAdjust="spacingAndGlyphs">LMI</text>
<path d="M1167.8 735.9h8.3M1171.9 731.8v8.3" stroke="#fff" stroke-width="2.4"/>
<text x="1166.27" y="733.30" text-anchor="middle" font-size="11.34" fill="#fff" textLength="21.34" lengthAdjust="spacingAndGlyphs">LEO</text>
<path d="M1274.4 735.9h8.3M1278.6 731.8v8.3" stroke="#fff" stroke-width="2.4"/>
<text x="1274.06" y="733.30" text-anchor="middle" font-size="11.34" fill="#fff" textLength="21.54" lengthAdjust="spacingAndGlyphs">EHY</text>
<path d="M1496.8 735.9h8.3M1501.0 731.8v8.3" stroke="#fff" stroke-width="2.4"/>
<text x="1500.31" y="733.30" text-anchor="middle" font-size="11.34" fill="#fff" textLength="21.75" lengthAdjust="spacingAndGlyphs">ECV</text>
<path d="M598.9 719.5h8.3M603.0 715.4v8.3" stroke="#fff" stroke-width="2.4"/>
<text x="603.92" y="716.95" text-anchor="middle" font-size="11.34" fill="#fff" textLength="17.97" lengthAdjust="spacingAndGlyphs">JXA</text>
<path d="M726.8 719.5h8.3M730.9 715.4v8.3" stroke="#fff" stroke-width="2.4"/>
<text x="715.81" y="716.95" text-anchor="middle" font-size="11.34" fill="#fff" textLength="22.99" lengthAdjust="spacingAndGlyphs">KCG</text>
<path d="M1187.5 719.5h8.3M1191.7 715.4v8.3" stroke="#fff" stroke-width="2.4"/>
<text x="1156.98" y="716.95" text-anchor="middle" font-size="11.34" fill="#fff" textLength="23.78" lengthAdjust="spacingAndGlyphs">AND</text>
<path d="M1270.6 719.5h8.3M1274.8 715.4v8.3" stroke="#fff" stroke-width="2.4"/>
<text x="1274.69" y="716.95" text-anchor="middle" font-size="11.34" fill="#fff" textLength="24.02" lengthAdjust="spacingAndGlyphs">DAD</text>
<path d="M687.6 703.2h8.3M691.8 699.1v8.3" stroke="#fff" stroke-width="2.4"/>
<text x="666.60" y="700.60" text-anchor="middle" font-size="11.34" fill="#fff" textLength="17.51" lengthAdjust="spacingAndGlyphs">ERI</text>
<path d="M1101.8 703.2h8.3M1106.0 699.1v8.3" stroke="#fff" stroke-width="2.4"/>
<text x="1108.46" y="700.60" text-anchor="middle" font-size="11.34" fill="#fff" textLength="21.19" lengthAdjust="spacingAndGlyphs">SLD</text>
<path d="M1206.8 703.2h8.3M1211.0 699.1v8.3" stroke="#fff" stroke-width="2.4"/>
<text x="1211.20" y="700.60" text-anchor="middle" font-size="11.34" fill="#fff" textLength="22.86" lengthAdjust="spacingAndGlyphs">ORS</text>
<path d="M1299.5 703.2h8.3M1303.7 699.1v8.3" stroke="#fff" stroke-width="2.4"/>
<text x="1300.12" y="700.60" text-anchor="middle" font-size="11.34" fill="#fff" textLength="24.51" lengthAdjust="spacingAndGlyphs">GEM</text>
<path d="M1118.8 686.9h8.3M1122.9 682.7v8.3" stroke="#fff" stroke-width="2.4"/>
<text x="1123.00" y="684.25" text-anchor="middle" font-size="11.34" fill="#fff" textLength="24.31" lengthAdjust="spacingAndGlyphs">KUM</text>
<path d="M1023.6 842.3V641.4" stroke="#ff0000" stroke-width="1.5" stroke-dasharray="5.14 2.22"/>
<rect x="20.5" y="641.5" width="1765" height="201" fill="none" stroke="#fff" stroke-width="1.05"/>
<path d="M20.5 842.5v5" stroke="#fff" stroke-width="1.05"/>
<text x="20.20" y="862.20" text-anchor="middle" font-size="14.60" fill="#fff" textLength="8.84" lengthAdjust="spacingAndGlyphs">0</text>
<path d="M265.5 842.5v5" stroke="#fff" stroke-width="1.05"/>
<text x="265.33" y="862.20" text-anchor="middle" font-size="14.60" fill="#fff" textLength="17.69" lengthAdjust="spacingAndGlyphs">50</text>
<path d="M510.5 842.5v5" stroke="#fff" stroke-width="1.05"/>
<text x="510.46" y="862.20" text-anchor="middle" font-size="14.60" fill="#fff" textLength="26.53" lengthAdjust="spacingAndGlyphs">100</text>
<path d="M755.5 842.5v5" stroke="#fff" stroke-width="1.05"/>
<text x="755.59" y="862.20" text-anchor="middle" font-size="14.60" fill="#fff" textLength="26.53" lengthAdjust="spacingAndGlyphs">150</text>
<path d="M1000.5 842.5v5" stroke="#fff" stroke-width="1.05"/>
<text x="1000.72" y="862.20" text-anchor="middle" font-size="14.60" fill="#fff" textLength="26.53" lengthAdjust="spacingAndGlyphs">200</text>
<path d="M1245.5 842.5v5" stroke="#fff" stroke-width="1.05"/>
<text x="1245.85" y="862.20" text-anchor="middle" font-size="14.60" fill="#fff" textLength="26.53" lengthAdjust="spacingAndGlyphs">250</text>
<path d="M1490.5 842.5v5" stroke="#fff" stroke-width="1.05"/>
<text x="1490.98" y="862.20" text-anchor="middle" font-size="14.60" fill="#fff" textLength="26.53" lengthAdjust="spacingAndGlyphs">300</text>
<path d="M1736.5 842.5v5" stroke="#fff" stroke-width="1.05"/>
<text x="1736.11" y="862.20" text-anchor="middle" font-size="14.60" fill="#fff" textLength="26.53" lengthAdjust="spacingAndGlyphs">350</text>
<text x="902.50" y="882.00" text-anchor="middle" font-size="14.60" fill="#fff" textLength="146.80" lengthAdjust="spacingAndGlyphs">Solar longitude (deg)</text>
</svg></body></html>
